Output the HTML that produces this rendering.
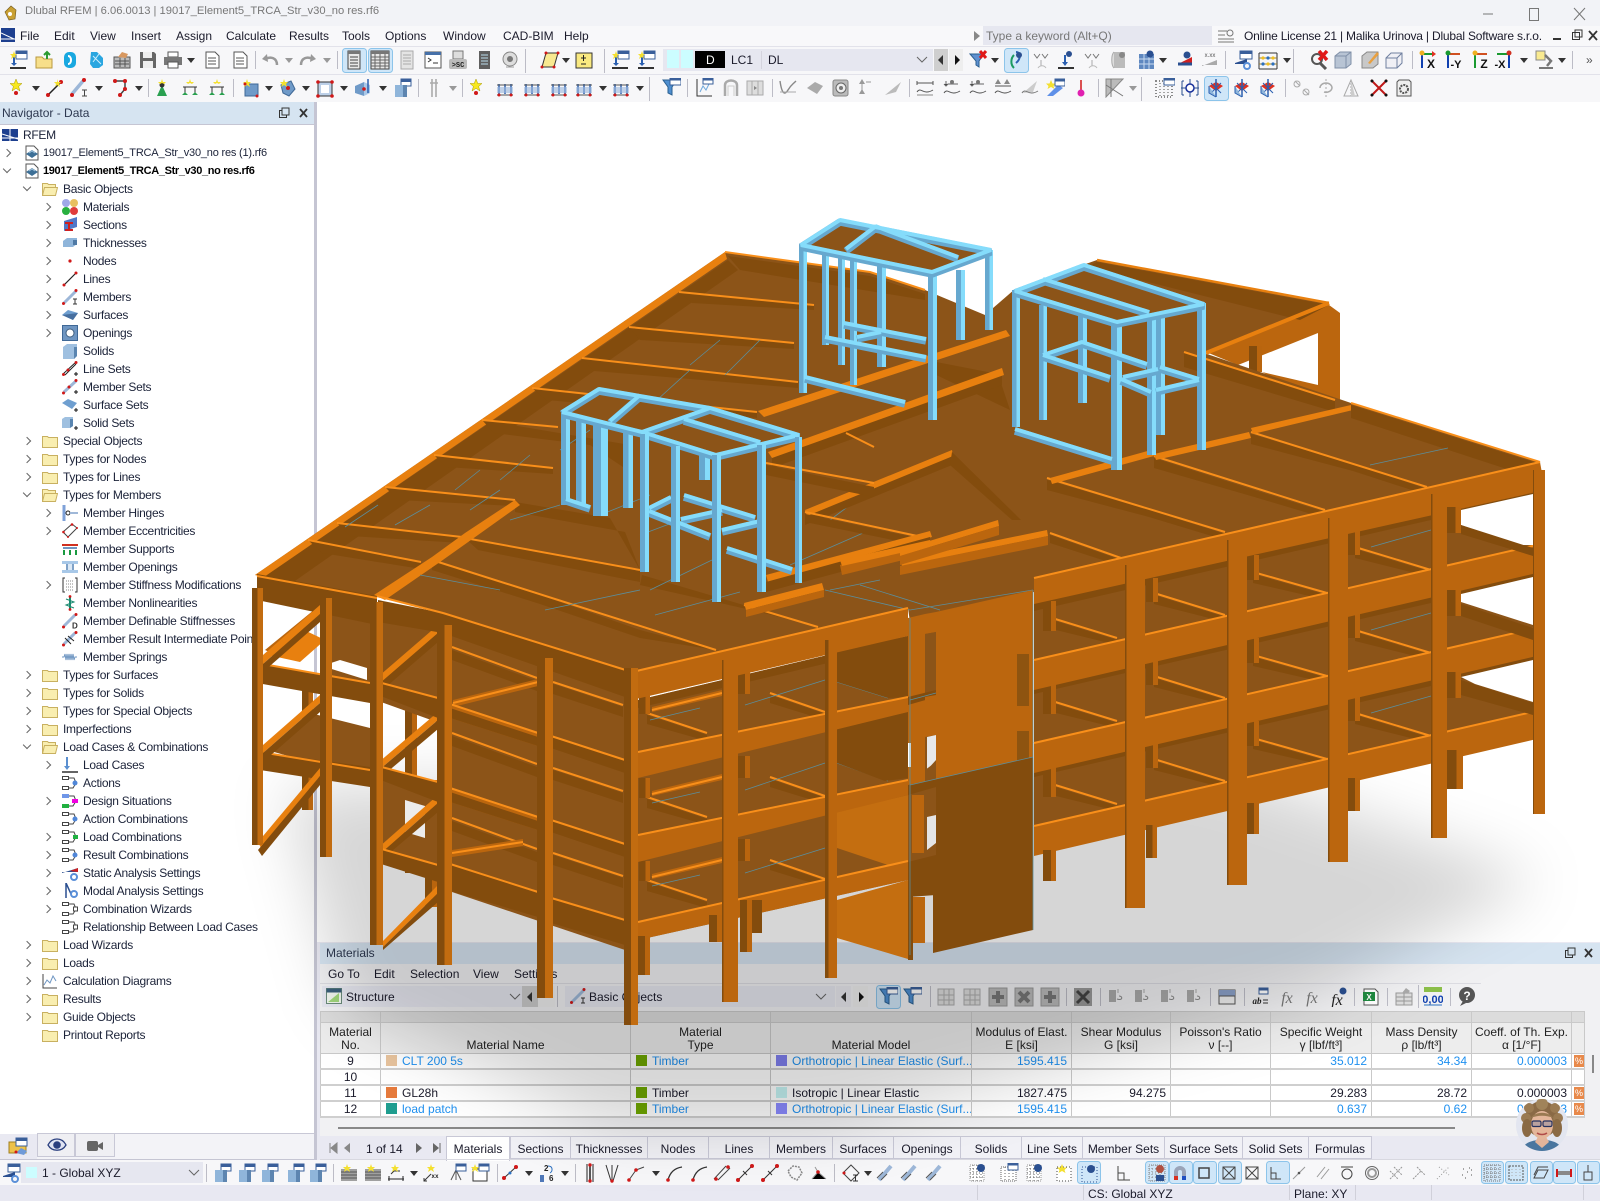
<!DOCTYPE html>
<html><head><meta charset="utf-8"><title>Dlubal RFEM</title>
<style>
html,body{margin:0;padding:0;width:1600px;height:1200px;overflow:hidden;background:#e9e9f2;font:12px/14px "Liberation Sans",sans-serif;color:#1a1a2a}
.t,.b0{position:absolute;white-space:nowrap}
.p{position:absolute}
#tree{position:absolute;left:0;top:126px;width:314px;height:1000px;overflow:hidden;letter-spacing:-.28px}
.r{position:relative;height:18px;line-height:18px;white-space:nowrap;color:#1b2238}
.r span{position:absolute;top:0}
.r svg{position:absolute;top:1px;width:16px;height:16px}
.r i{position:absolute;top:6px;width:5px;height:5px;border:solid #666;border-width:1.4px 1.4px 0 0;transform:rotate(45deg)}
.r i.o{transform:rotate(135deg);top:4px}
.l0 span{left:43px}.l0 svg{left:24px}.l0 i{left:4px}
.l1 span{left:63px}.l1 svg{left:42px}.l1 i{left:24px}
.l2 span{left:83px}.l2 svg{left:62px}.l2 i{left:44px}
table{position:absolute;left:320px;top:1011px;border-collapse:collapse;table-layout:fixed;width:1264px;font-size:12px}
td,th{padding:0;border:1px solid #c9c9c9;overflow:hidden;white-space:nowrap;font-weight:normal}
th{background:#ededed;vertical-align:bottom;text-align:center;line-height:13px;padding-bottom:1px;color:#222}
tr.bd td{height:14px;line-height:14px;border-bottom:2px solid #cfcfcf;background:#fff}
td.n{background:#e6e6e6;text-align:center}
td.c{background:#f8f8ef}
td.v{text-align:right;padding-right:4px}
td.b{color:#1e90f0}
td s{display:inline-block;width:11px;height:11px;margin:0 5px 0 5px;vertical-align:-1px;text-decoration:none}
td.pc{background:#fff}
td.pc b{display:block;width:10px;height:12px;background:#e8894a;color:#fff;font:9px/12px "Liberation Sans",sans-serif;text-align:center;margin-left:2px}
.tab{position:absolute;top:1136px;height:23px;line-height:24px;background:#f1f1f6;border:1px solid #c8c8d6;box-sizing:border-box;text-align:center;color:#1a1a2a}
.e{fill:#bb660e}.d{fill:#834c0d}.b{fill:#8c5418}.h{fill:#e8800f}.o2{fill:#c46e10}
.l{stroke:#f98f1a;stroke-width:2;fill:none}
.tl{stroke:#5b8e9c;stroke-width:.8;fill:none}
</style></head><body>

<!-- chrome backgrounds -->
<div class="p" style="left:0;top:0;width:1600px;height:26px;background:#f2f3f7"></div>
<div class="p" style="left:0;top:26px;width:1600px;height:20px;background:#f8f8fa;border-bottom:1px solid #e2e2ea"></div>
<div class="p" style="left:0;top:47px;width:1600px;height:27px;background:#f7f7f9;border-bottom:1px solid #e2e2ea"></div>
<div class="p" style="left:0;top:75px;width:1600px;height:27px;background:#f7f7f9"></div>
<div class="p" style="left:316px;top:102px;width:1284px;height:840px;background:#fff"></div>
<div class="p" style="left:0;top:124px;width:314px;height:1010px;background:#fff"></div>
<div class="p" style="left:314px;top:102px;width:3px;height:1058px;background:#c5c5d3"></div>

<!-- title -->
<div class="t" style="left:25px;top:4px;color:#777;font-size:11.2px">Dlubal RFEM | 6.06.0013 | 19017_Element5_TRCA_Str_v30_no res.rf6</div>
<svg class="p" style="left:2px;top:3px" width="18" height="20" viewBox="0 0 18 20"><path d="M3 9l6-6 5 4-1 9-6 1z" fill="#c9a033" stroke="#7a6020" stroke-width=".7"/><circle cx="8" cy="11" r="2" fill="#fff"/></svg>
<svg class="p" style="left:1478px;top:3px" width="120" height="20"><path d="M5 11h10" stroke="#777"/><rect x="51.500" y="5.500" width="9" height="12" fill="none" stroke="#777"/><path d="M96 5l11 12M107 5L96 17" stroke="#777"/></svg>

<!-- menu -->
<svg class="p" style="left:1px;top:28px" width="15" height="15"><rect width="14" height="14" fill="#1d3f8f"/><path d="M0 5l13 6M0 11h14" stroke="#fff"/></svg>
<div class="t" style="left:20px;top:29px">File</div><div class="t" style="left:54px;top:29px">Edit</div><div class="t" style="left:90px;top:29px">View</div><div class="t" style="left:131px;top:29px">Insert</div><div class="t" style="left:176px;top:29px">Assign</div><div class="t" style="left:226px;top:29px">Calculate</div><div class="t" style="left:289px;top:29px">Results</div><div class="t" style="left:342px;top:29px">Tools</div><div class="t" style="left:385px;top:29px">Options</div><div class="t" style="left:443px;top:29px">Window</div><div class="t" style="left:503px;top:29px">CAD-BIM</div><div class="t" style="left:564px;top:29px">Help</div>
<div class="p" style="left:983px;top:26px;width:229px;height:19px;background:#e6e7f0"></div>
<div class="t" style="left:986px;top:29px;color:#777">Type a keyword (Alt+Q)</div>
<svg class="p" style="left:973px;top:31px" width="8" height="10"><path d="M1 0l6 5-6 5z" fill="#888"/></svg>
<svg class="p" style="left:1217px;top:28px" width="18" height="16"><path d="M1 3h9M1 7h7M1 11h16M1 14h16" stroke="#777"/><circle cx="13" cy="5" r="3" fill="none" stroke="#777"/></svg>
<div class="t" style="left:1244px;top:29px;letter-spacing:-.19px">Online License 21 | Malika Urinova | Dlubal Software s.r.o.</div>
<svg class="p" style="left:1548px;top:28px" width="52" height="16"><path d="M5 11h8" stroke="#333" stroke-width="2"/><rect x="24.500" y="4.500" width="7" height="7" fill="none" stroke="#333"/><rect x="27" y="2" width="7" height="7" fill="none" stroke="#333"/><path d="M41 3l8 9M49 3l-8 9" stroke="#333" stroke-width="1.800"/></svg>

<!-- Navigator -->
<div class="p" style="left:0;top:102px;width:314px;height:22px;background:#d6e4f1;border-bottom:1px solid #c5c5d3"></div>
<div class="t" style="left:2px;top:106px;color:#2d3850">Navigator - Data</div>
<svg class="p" style="left:276px;top:106px" width="36" height="14"><rect x="3.500" y="4.500" width="7" height="7" fill="none" stroke="#333"/><rect x="6" y="2" width="7" height="7" fill="#d6e4f1" stroke="#333"/><path d="M24 3l7 8M31 3l-7 8" stroke="#333" stroke-width="1.800"/></svg>

<svg width="0" height="0" style="position:absolute"><defs>
<symbol id="fo" viewBox="0 0 16 16"><path d="M.5 3.500h5l1 1h9v10H.5z" fill="#f9eeb0" stroke="#c8b060"/></symbol>
<symbol id="fx" viewBox="0 0 16 16"><path d="M.5 14.500V2.500h5l1 1h7v3" fill="#f9eeb0" stroke="#c8b060"/><path d="M.5 14.500l2-8h13l-2 8z" fill="#f9eeb0" stroke="#c8b060"/></symbol>
<symbol id="rf" viewBox="0 0 16 16"><path d="M2 1h8l4 4v10H2z" fill="#fff" stroke="#555"/><path d="M2 9l6-4 6 4-6 4z" fill="#3d6f96"/><path d="M5 8l3-2 3 2" stroke="#9fc3dd" fill="none"/></symbol>
<symbol id="rm" viewBox="0 0 16 16"><circle cx="4" cy="4" r="4" fill="#a0a8e8"/><circle cx="12" cy="4" r="4" fill="#e8c060"/><circle cx="4" cy="12" r="4" fill="#28b040"/><circle cx="12" cy="12" r="4" fill="#e03c3c"/></symbol>
<symbol id="se" viewBox="0 0 16 16"><path d="M2 4l13-4v10L2 14z" fill="#4f78c8"/><path d="M3 6h8M7 6v7M3 13h8" stroke="#d02020" stroke-width="2"/></symbol>
<symbol id="th" viewBox="0 0 16 16"><path d="M1 6l4-3h10v6l-4 3H1z" fill="#8fb5da"/><path d="M11 5h4v5h-4z" fill="#4f7aa5"/></symbol>
<symbol id="nd" viewBox="0 0 16 16"><circle cx="8" cy="8" r="1.600" fill="#d01818"/></symbol>
<symbol id="ln" viewBox="0 0 16 16"><path d="M2 14L14 2" stroke="#222" stroke-width="1.200"/><circle cx="2" cy="14" r="1.500" fill="#d01818"/><circle cx="14" cy="2" r="1.500" fill="#d01818"/></symbol>
<symbol id="me" viewBox="0 0 16 16"><path d="M2 14L14 2" stroke="#9db7d8" stroke-width="3"/><circle cx="1.500" cy="14.500" r="1.500" fill="#d01818"/><circle cx="14" cy="1.500" r="1.500" fill="#d01818"/><path d="M11 10h4M13 10v5M11 15h4" stroke="#333"/></symbol>
<symbol id="su" viewBox="0 0 16 16"><path d="M0 8l6-5 10 3-5 7z" fill="#6f9fd0"/><path d="M0 8l11 5 5-7" fill="#476f9f"/></symbol>
<symbol id="op" viewBox="0 0 16 16"><rect x=".5" y=".5" width="15" height="15" fill="#6f96c2" stroke="#3f6896"/><circle cx="8" cy="8" r="4" fill="#fff" stroke="#3f5f80"/></symbol>
<symbol id="so" viewBox="0 0 16 16"><path d="M1 4l4-3h10v12l-3 3H1z" fill="#9fc0e0"/><path d="M12 4h3v9l-3 3z" fill="#5a85b0"/></symbol>
<symbol id="ls" viewBox="0 0 16 16"><path d="M1 13L14 1M3 14L14 3" stroke="#222"/><circle cx="6" cy="9" r="1.500" fill="#d01818"/><circle cx="1.500" cy="13.500" r="1.500" fill="#d01818"/><circle cx="14" cy="1.500" r="1.500" fill="#d01818"/><path d="M12 13h4M14 11v4" stroke="#111"/></symbol>
<symbol id="ms" viewBox="0 0 16 16"><path d="M2 13L14 2" stroke="#9db7d8" stroke-width="3"/><circle cx="7" cy="8" r="1.500" fill="#d01818"/><circle cx="1.500" cy="14" r="1.500" fill="#d01818"/><circle cx="14" cy="1.500" r="1.500" fill="#d01818"/><path d="M12 13h4M14 11v4" stroke="#111"/></symbol>
<symbol id="ss" viewBox="0 0 16 16"><path d="M0 6l6-4 9 4-5 6z" fill="#6f9fd0"/><path d="M12 13h4M14 11v4" stroke="#111"/></symbol>
<symbol id="sd" viewBox="0 0 16 16"><path d="M0 4l3-2h8v9l-3 2H0z" fill="#9fc0e0"/><path d="M8 4h3v7l-3 2z" fill="#5a85b0"/><path d="M12 13h4M14 11v4" stroke="#111"/></symbol>
<symbol id="hi" viewBox="0 0 16 16"><path d="M2 0v16" stroke="#7fa2d8" stroke-width="3"/><circle cx="6" cy="8" r="2" fill="#fff" stroke="#222"/><path d="M8 8h8" stroke="#a0b8d8" stroke-width="2"/></symbol>
<symbol id="ec" viewBox="0 0 16 16"><path d="M1 9L10 1l5 4-9 9z" fill="#fff" stroke="#444"/><circle cx="1.500" cy="9" r="1.300" fill="#d01818"/><circle cx="10" cy="1.500" r="1.300" fill="#d01818"/><circle cx="15" cy="5" r="1" fill="#d01818"/><circle cx="6" cy="14" r="1" fill="#d01818"/></symbol>
<symbol id="sp" viewBox="0 0 16 16"><path d="M0 4h16" stroke="#d03020" stroke-width="2"/><path d="M1 6h14v2H1z" fill="#6f96c2"/><path d="M2 9v5M8 9v5M14 9v5" stroke="#1a9a40" stroke-width="2"/></symbol>
<symbol id="mo" viewBox="0 0 16 16"><path d="M0 2h16v3H0zM0 11h16v3H0z" fill="#a8c8e8"/><path d="M4 5h8v6H4z" fill="#dbe8f5"/><path d="M5 5v6M11 5v6" stroke="#7fa2c8" stroke-width="2"/></symbol>
<symbol id="sm" viewBox="0 0 16 16"><path d="M3 1H1v14h2M13 1h2v14h-2" stroke="#333" fill="none"/><path d="M4 4h8M4 7h8M4 10h8M4 13h8" stroke="#888" stroke-dasharray="1 1"/></symbol>
<symbol id="nl" viewBox="0 0 16 16"><path d="M8 1v14" stroke="#1a8a70" stroke-width="2"/><path d="M4 4l8 3-8 3 8 3" stroke="#1a8a70" fill="none"/><circle cx="8" cy="1.500" r="1.400" fill="#d01818"/><circle cx="8" cy="14.500" r="1.400" fill="#d01818"/></symbol>
<symbol id="md" viewBox="0 0 16 16"><path d="M2 13L13 2" stroke="#9db7d8" stroke-width="3"/><circle cx="1.500" cy="14" r="1.500" fill="#d01818"/><circle cx="14" cy="1.500" r="1.500" fill="#d01818"/><text x="10" y="15.500" font-size="8" font-weight="bold" font-family="Liberation Sans" fill="#333">D</text></symbol>
<symbol id="mr" viewBox="0 0 16 16"><path d="M2 13L13 2" stroke="#9db7d8" stroke-width="3"/><path d="M3 7l6 6M6 5l6 5" stroke="#222"/><circle cx="1.500" cy="14" r="1.500" fill="#d01818"/><circle cx="14" cy="1.500" r="1.500" fill="#d01818"/></symbol>
<symbol id="mg" viewBox="0 0 16 16"><path d="M0 8h2l1-3 1 6 1-6 1 6 1-6 1 6 1-6 1 6 1-6 1 6 1-3h2" stroke="#6f96c2" fill="none"/></symbol>
<symbol id="lc" viewBox="0 0 16 16"><path d="M5 0v10" stroke="#5a8fd0" stroke-width="2"/><path d="M2 9l3 4 3-4z" fill="#5a8fd0"/><path d="M0 15h16" stroke="#222" stroke-width="1.400"/></symbol>
<symbol id="ac" viewBox="0 0 16 16"><rect x=".5" y="1.500" width="6" height="3" fill="#fff" stroke="#444"/><rect x=".5" y="11.500" width="6" height="3" fill="#fff" stroke="#444"/><path d="M7 3h5l2 5-3 5H7" fill="none" stroke="#444"/><circle cx="13" cy="8" r="2.500" fill="#4f86d8"/></symbol>
<symbol id="ad" viewBox="0 0 16 16"><rect width="7" height="4" y="1" fill="#6f96e8"/><rect width="7" height="4" y="11" fill="#20b040"/><path d="M7 3h5l2 5-3 5H7" fill="none" stroke="#444"/><rect x="10" y="6" width="6" height="4" fill="#f000e0"/></symbol>
<symbol id="ag" viewBox="0 0 16 16"><rect x=".5" y="1.500" width="6" height="3" fill="#fff" stroke="#444"/><rect x=".5" y="11.500" width="6" height="3" fill="#fff" stroke="#444"/><path d="M7 3h5l2 5-3 5H7" fill="none" stroke="#444"/><rect x="11" y="6" width="5" height="4" fill="#20b040"/></symbol>
<symbol id="st" viewBox="0 0 16 16"><path d="M0 8l16-5v4H0z" fill="#2a4f90"/><path d="M8 6l8-3v4z" fill="#d02020"/><circle cx="12" cy="12" r="3" fill="none" stroke="#5a8fd8" stroke-width="2"/></symbol>
<symbol id="mda" viewBox="0 0 16 16"><path d="M4 0l5 11M4 15V0" stroke="#2a4f90" stroke-width="1.500"/><circle cx="12" cy="11" r="3" fill="none" stroke="#5a8fd8" stroke-width="2"/></symbol>
<symbol id="cw" viewBox="0 0 16 16"><rect x=".5" y="1.500" width="6" height="3" fill="#fff" stroke="#444"/><rect x=".5" y="11.500" width="6" height="3" fill="#fff" stroke="#444"/><path d="M7 3h5l2 5-3 5H7" fill="none" stroke="#444"/><rect x="11.500" y="6" width="4" height="4" fill="#fff" stroke="#444"/></symbol>
<symbol id="cd" viewBox="0 0 16 16"><path d="M1 1v14h14" stroke="#444" fill="none"/><path d="M2 12l3-5 3 3 3-7 3 5" stroke="#6f96c2" fill="none"/></symbol>

<!-- toolbar glyphs 20x20 -->
<symbol id="a1" viewBox="0 0 20 20"><path d="M4 2h9l4 4v12H4z" fill="#fff" stroke="#555"/><path d="M6 8h8M6 11h8M6 14h8" stroke="#555"/></symbol>
<symbol id="a2" viewBox="0 0 20 20"><path d="M2 7h6l2 2h8v9H2z" fill="#f7df8a" stroke="#b89a40"/><path d="M13 9V3M10 5l3-3 3 3" stroke="#2a9a30" stroke-width="2" fill="none"/></symbol>
<symbol id="a3" viewBox="0 0 20 20"><rect x="4" y="2" width="12" height="16" rx="5" fill="#19a8e0"/><path d="M8 6c4 0 4 8 0 8" stroke="#fff" stroke-width="2" fill="none"/></symbol>
<symbol id="a4" viewBox="0 0 20 20"><path d="M4 2h6l6 6v7l-4 3H6l-3-4z" fill="#2aa6e0"/><path d="M6 6l8 8M6 12l6-8" stroke="#cdeefc"/></symbol>
<symbol id="a5" viewBox="0 0 20 20"><rect x="2" y="7" width="16" height="11" fill="#bbb" stroke="#555"/><path d="M3 11h14M3 14h14M8 8v9M13 8v9" stroke="#555"/><path d="M6 7l4-5 6 2-2 4z" fill="#d89860"/></symbol>
<symbol id="a6" viewBox="0 0 20 20"><path d="M2 2h14l2 2v14H2z" fill="#666"/><rect x="5" y="2" width="9" height="6" fill="#eee"/><rect x="5" y="11" width="10" height="7" fill="#eee"/></symbol>
<symbol id="a7" viewBox="0 0 20 20"><rect x="5" y="2" width="10" height="5" fill="#fff" stroke="#555"/><rect x="1" y="7" width="18" height="8" fill="#777"/><rect x="5" y="12" width="10" height="6" fill="#fff" stroke="#555"/></symbol>
<symbol id="a8" viewBox="0 0 20 20"><path d="M17 15c0-7-6-9-12-6" stroke="#999" stroke-width="2.500" fill="none"/><path d="M7 4L2 9l6 3z" fill="#999"/></symbol>
<symbol id="a9" viewBox="0 0 20 20"><path d="M3 15c0-7 6-9 12-6" stroke="#999" stroke-width="2.500" fill="none"/><path d="M13 4l5 5-6 3z" fill="#999"/></symbol>
<symbol id="b1" viewBox="0 0 20 20"><rect x="4" y="1" width="12" height="18" fill="#e8e8e8" stroke="#444"/><rect x="4" y="1" width="12" height="3" fill="#777"/><path d="M6 7h8M6 10h8M6 13h8M6 16h8" stroke="#444"/></symbol>
<symbol id="b2" viewBox="0 0 20 20"><rect x="1" y="1" width="18" height="18" fill="#e8e8e8" stroke="#444"/><rect x="1" y="1" width="18" height="3" fill="#777"/><path d="M1 7h18M1 10h18M1 13h18M1 16h18M5 4v15M10 4v15M15 4v15" stroke="#666"/></symbol>
<symbol id="b3" viewBox="0 0 20 20"><rect x="4" y="1" width="12" height="18" fill="#e4e4e4" stroke="#aaa"/><path d="M6 5h8M6 8h8M6 11h8M6 14h8" stroke="#aaa"/></symbol>
<symbol id="b4" viewBox="0 0 20 20"><rect x="2" y="2" width="16" height="16" fill="#fff" stroke="#555"/><rect x="2" y="2" width="16" height="3" fill="#4670a8"/><path d="M5 8l3 2-3 2M10 13h5" stroke="#333" fill="none"/></symbol>
<symbol id="b5" viewBox="0 0 20 20"><rect x="5" y="1" width="10" height="8" fill="#ddd" stroke="#777"/><rect x="1" y="9" width="18" height="10" rx="2" fill="#bbb"/><text x="10" y="17" font-size="7" font-weight="bold" font-family="Liberation Mono" text-anchor="middle" fill="#222">&gt;SC</text></symbol>
<symbol id="b6" viewBox="0 0 20 20"><rect x="5" y="1" width="11" height="18" fill="#5f5f5f"/><path d="M7 5h7M7 8h7M7 11h7M7 14h7" stroke="#bde"/></symbol>
<symbol id="b7" viewBox="0 0 20 20"><circle cx="10" cy="9" r="7" fill="#ddd" stroke="#888"/><circle cx="10" cy="9" r="3" fill="#777"/><path d="M6 17h8" stroke="#999"/></symbol>
<symbol id="b8" viewBox="0 0 20 20"><path d="M6 3h12l-4 14H2z" fill="#f9e990" stroke="#333"/><circle cx="6" cy="3" r="1.500" fill="#d01818"/><circle cx="18" cy="3" r="1.500" fill="#d01818"/><circle cx="2" cy="17" r="1.500" fill="#d01818"/><circle cx="14" cy="17" r="1.500" fill="#d01818"/></symbol>
<symbol id="b9" viewBox="0 0 20 20"><rect x="2" y="3" width="16" height="15" fill="#f9e980" stroke="#333"/><path d="M7 8h5M9.500 5v6M7 14h5" stroke="#222"/></symbol>
<symbol id="c1" viewBox="0 0 20 20"><rect x="8" y="1" width="11" height="8" fill="#fff" stroke="#3a5f9a"/><rect x="8" y="1" width="11" height="3" fill="#3a5f9a"/><path d="M6 4v11" stroke="#2a5fb0" stroke-width="2"/><path d="M2 18h16" stroke="#333" stroke-width="2"/><path d="M3 13l3 3 3-3z" fill="#2a5fb0"/><path d="M6 1l1 3 2 0-2 2 1 3-2-2-3 2 1-3-2-2h3z" fill="#f4e030"/></symbol>
<symbol id="c2" viewBox="0 0 20 20"><path d="M7 1l1.800 4.500H13l-3.400 3 1.400 4.500L7 10.300 3 13l1.400-4.500L1 5.500h4.200z" fill="#f8e81e" stroke="#a89800" stroke-width=".5"/><circle cx="7" cy="15" r="2" fill="#d01818"/></symbol>
<symbol id="c3" viewBox="0 0 20 20"><path d="M3 17L16 4" stroke="#222" stroke-width="1.500"/><circle cx="3" cy="17" r="2" fill="#d01818"/><circle cx="16" cy="4" r="2" fill="#d01818"/><path d="M12 1l1 3h3l-2 2 1 3-3-2-2 2 1-3-2-2h3z" fill="#f4e030"/></symbol>
<symbol id="c4" viewBox="0 0 20 20"><path d="M3 16L14 3" stroke="#9db7d8" stroke-width="3.500"/><circle cx="3" cy="17" r="2" fill="#d01818"/><circle cx="15" cy="2" r="2" fill="#d01818"/><path d="M13 12h5M15.500 12v6M13 18h5" stroke="#444"/></symbol>
<symbol id="c5" viewBox="0 0 20 20"><path d="M4 3h10v8l-5 6" fill="none" stroke="#444" stroke-width="1.500"/><circle cx="4" cy="3" r="2" fill="#d01818"/><circle cx="14" cy="3" r="2" fill="#d01818"/><circle cx="14" cy="11" r="2" fill="#d01818"/><circle cx="9" cy="17" r="2" fill="#d01818"/></symbol>
<symbol id="c6" viewBox="0 0 20 20"><path d="M10 7l-5 11h10z" fill="#2aa050"/><circle cx="10" cy="7" r="2.500" fill="#333"/><path d="M10 1l1 3h3l-2 2-2-1-2 1-2-2h3z" fill="#f4e030"/></symbol>
<symbol id="c7" viewBox="0 0 20 20"><path d="M3 9h14M5 9v6M15 9v6" stroke="#333"/><path d="M2 17l3-3 3 3zM12 17l3-3 3 3z" fill="#2aa050"/><path d="M10 1l1 3h3l-2 2-2-1-2 1-2-2h3z" fill="#f4e030"/></symbol>
<symbol id="c8" viewBox="0 0 20 20"><rect x="5" y="6" width="13" height="12" fill="#6f9ac8" stroke="#3f6896"/><path d="M7 1l1 3h3l-2 2 1 3-3-2-3 2 1-3-2-2h3z" fill="#f4e030"/><circle cx="17" cy="18" r="1.500" fill="#d01818"/><circle cx="5" cy="6" r="1.500" fill="#d01818"/></symbol>
<symbol id="c9" viewBox="0 0 20 20"><path d="M3 7l10-4 4 8-6 7-6-3z" fill="#6f9ac8" stroke="#3f6896"/><circle cx="10" cy="10" r="2" fill="#d01818"/><path d="M6 1l1 3h3l-2 2 1 3-3-2-3 2 1-3-2-2h3z" fill="#f4e030"/></symbol>
<symbol id="d1" viewBox="0 0 20 20"><path d="M3 4h14v14H3z" fill="#bcd0e8" stroke="#333"/><rect x="6" y="7" width="8" height="8" fill="#fff"/><circle cx="3" cy="4" r="1.800" fill="#d01818"/><circle cx="17" cy="4" r="1.800" fill="#d01818"/><circle cx="3" cy="18" r="1.800" fill="#d01818"/><circle cx="17" cy="18" r="1.800" fill="#d01818"/></symbol>
<symbol id="d2" viewBox="0 0 20 20"><path d="M2 8l9-4v14l-9-3z" fill="#6f9ac8"/><path d="M11 4l6 3v8l-6 3z" fill="#aac8e8"/><path d="M15 1v14" stroke="#2a5fb0" stroke-width="1.500"/><circle cx="11" cy="11" r="1.800" fill="#d01818"/></symbol>
<symbol id="d3" viewBox="0 0 20 20"><rect x="9" y="1" width="10" height="7" fill="#fff" stroke="#3a5f9a"/><rect x="9" y="1" width="10" height="3" fill="#3a5f9a"/><path d="M3 7h12v12H3z" fill="#8fb5da"/><path d="M11 7h4v12h-4z" fill="#5d85b0"/></symbol>
<symbol id="d4" viewBox="0 0 20 20"><path d="M8 1v18M12 1v18M6 5h8" stroke="#aaa" stroke-width="1.600"/></symbol>
<symbol id="d5" viewBox="0 0 20 20"><path d="M4 6v10M16 6v10M10 6v10" stroke="#2a5fb0" stroke-width="1.500"/><path d="M2 17h16M2 7h16" stroke="#555"/><path d="M2 9h16v6H2z" fill="#9bb8dc" fill-opacity=".6"/><circle cx="16" cy="17" r="1.500" fill="#d01818"/><circle cx="4" cy="17" r="1.500" fill="#d01818"/></symbol>
<symbol id="d6" viewBox="0 0 20 20"><path d="M2 2h14l-5 7v8l-4-2V9z" fill="#4f8fd0" stroke="#2a5f90"/><rect x="9" y="0" width="11" height="7" fill="#fff" stroke="#3a5f9a"/><rect x="9" y="0" width="11" height="2.500" fill="#3a5f9a"/></symbol>
<symbol id="d7" viewBox="0 0 20 20"><path d="M3 1v17h15" fill="none" stroke="#333"/><path d="M6 14l3-6 3 4 3-6" fill="none" stroke="#6fa8dc"/><rect x="9" y="0" width="10" height="6" fill="#fff" stroke="#3a5f9a"/><rect x="9" y="0" width="10" height="2.500" fill="#3a5f9a"/></symbol>
<symbol id="d8" viewBox="0 0 20 20"><path d="M4 18V7c0-6 12-6 12 0v11" fill="none" stroke="#aaa" stroke-width="2.500"/><path d="M7 18V8h6v10" fill="none" stroke="#ccc"/></symbol>
<symbol id="d9" viewBox="0 0 20 20"><rect x="2" y="3" width="16" height="14" fill="#ddd" stroke="#aaa"/><path d="M7 3v14M13 3v14" stroke="#aaa"/><path d="M9 8l3 2-3 2z" fill="#888"/></symbol>
<symbol id="e1" viewBox="0 0 20 20"><path d="M2 3c2 14 5 14 8 9s4-5 8-9" fill="none" stroke="#888" stroke-width="1.400"/><path d="M2 14h16" stroke="#aaa"/></symbol>
<symbol id="e2" viewBox="0 0 20 20"><path d="M2 10l8-6 8 4-6 8z" fill="#aaa"/></symbol>
<symbol id="e3" viewBox="0 0 20 20"><rect x="2" y="2" width="15" height="16" rx="2" fill="#bbb" stroke="#888"/><circle cx="10" cy="10" r="5" fill="#eee" stroke="#666"/><circle cx="10" cy="10" r="2" fill="#777"/></symbol>
<symbol id="e4" viewBox="0 0 20 20"><path d="M7 1l3 5H4zM7 11l3 5H4z" fill="#999"/><path d="M7 6v6" stroke="#999"/><path d="M16 4h-5" stroke="#999"/></symbol>
<symbol id="e5" viewBox="0 0 20 20"><path d="M2 17l16-13-5 10z" fill="#bbb"/></symbol>
<symbol id="e6" viewBox="0 0 20 20"><path d="M2 5h16M2 3v4M18 3v4" stroke="#555"/><path d="M2 14c4-6 6 4 16-2" fill="none" stroke="#555"/><path d="M2 17h16" stroke="#888"/></symbol>
<symbol id="e7" viewBox="0 0 20 20"><path d="M2 6l2 2 2-2 10 0M4 8V3" stroke="#666"/><circle cx="10" cy="4" r="2" fill="#777"/><path d="M2 15c4-6 6 4 16-2" fill="none" stroke="#555"/></symbol>
<symbol id="e8" viewBox="0 0 20 20"><path d="M5 1l3 5H2zM14 1l3 5h-6z" fill="#888"/><path d="M2 8h16" stroke="#555"/><path d="M2 15c4-6 6 4 16-2" fill="none" stroke="#555"/></symbol>
<symbol id="e9" viewBox="0 0 20 20"><path d="M3 15l14-12-4 11z" fill="#ccc"/><path d="M2 15c4-6 6 4 16-2" fill="none" stroke="#777"/></symbol>
<symbol id="f1" viewBox="0 0 20 20"><path d="M2 18L13 7l5 3-10 8z" fill="#5f90e8"/><path d="M6 2l1.500 3.500H11L8.500 8 9.500 11 6 9l-3.500 2 1-3L1 5.500h3.500z" fill="#f4e030"/><rect x="10" y="1" width="10" height="7" fill="#fff" stroke="#3a5f9a"/><rect x="10" y="1" width="10" height="2.500" fill="#3a5f9a"/></symbol>
<symbol id="f2" viewBox="0 0 20 20"><path d="M10 2v10" stroke="#d01818" stroke-width="1.500"/><circle cx="10" cy="15" r="3.500" fill="#e020b0"/></symbol>
<symbol id="f3" viewBox="0 0 20 20"><path d="M1 1h17L1 19z" fill="#bbb" stroke="#888"/><path d="M6 1v18M1 7l17 11" stroke="#777" fill="none"/></symbol>
<symbol id="f4" viewBox="0 0 20 20"><rect x="1" y="3" width="16" height="16" fill="none" stroke="#888" stroke-dasharray="1 2" stroke-width="2"/><path d="M5 5v14M9 5v14M13 5v14" stroke="#888" stroke-dasharray="1 2" stroke-width="1.500"/><rect x="9" y="0" width="11" height="7" fill="#fff" stroke="#3a5f9a"/><rect x="9" y="0" width="11" height="2.500" fill="#3a5f9a"/></symbol>
<symbol id="f5" viewBox="0 0 20 20"><path d="M2 3v14M18 3v14M2 3h2M16 3h2M2 17h2M16 17h2" stroke="#2a4f90"/><path d="M1 10h18M10 1v18" stroke="#2a4f90"/><circle cx="10" cy="10" r="4" fill="#fff" stroke="#18309a" stroke-width="1.500"/></symbol>
<symbol id="f6" viewBox="0 0 20 20"><path d="M3 8l7-4 7 4-7 5z" fill="#e03020"/><path d="M10 1v18" stroke="#2a5fb0" stroke-width="1.500"/><path d="M5 5l10 10M5 15L15 5" stroke="#2a5fb0"/><path d="M3 8v7l7 4" fill="#8fb5da" stroke="#2a5fb0"/></symbol>
<symbol id="f8" viewBox="0 0 20 20"><path d="M3 3l5 5M12 12l5 5" stroke="#aaa"/><circle cx="5" cy="6" r="3" fill="none" stroke="#aaa"/><circle cx="14" cy="14" r="3" fill="none" stroke="#aaa"/></symbol>
<symbol id="f9" viewBox="0 0 20 20"><path d="M10 1v18" stroke="#aaa" stroke-dasharray="2 2"/><path d="M4 10a6 5 0 0 1 12 0a6 5 0 0 1-8 4" fill="none" stroke="#aaa" stroke-width="1.500"/></symbol>
<symbol id="g1" viewBox="0 0 20 20"><path d="M10 2l-7 16h14z" fill="none" stroke="#aaa"/><path d="M10 2v16" stroke="#aaa" stroke-dasharray="2 1"/><path d="M10 2l4 16h-4z" fill="#ccc"/></symbol>
<symbol id="g2" viewBox="0 0 20 20"><path d="M2 2l16 16M18 2L2 18" stroke="#c01818" stroke-width="2"/><circle cx="3" cy="3" r="1.500" fill="#111"/><circle cx="17" cy="3" r="1.500" fill="#111"/><circle cx="3" cy="17" r="1.500" fill="#111"/><circle cx="17" cy="17" r="1.500" fill="#111"/></symbol>
<symbol id="g3" viewBox="0 0 20 20"><path d="M3 4l2-2h10l2 2v14H3z" fill="#eee" stroke="#555"/><circle cx="10" cy="11" r="4" fill="none" stroke="#555" stroke-dasharray="2 1" stroke-width="2"/></symbol>
<symbol id="g4" viewBox="0 0 20 20"><path d="M2 4h14l-5 7v6l-3-2v-4z" fill="#5f90d0" stroke="#2a5f90"/><path d="M12 1l6 7M18 1l-6 7" stroke="#e01818" stroke-width="3"/></symbol>
<symbol id="g5" viewBox="0 0 20 20"><path d="M10 2c5 0 5 7 0 11" fill="none" stroke="#2a5fb0" stroke-width="2"/><path d="M8 18c-4-4-3-10 0-13" fill="none" stroke="#1a9a60" stroke-width="2"/><circle cx="13" cy="5" r="3" fill="#2a4f90"/></symbol>
<symbol id="g6" viewBox="0 0 20 20"><path d="M2 4l3 4 3-4M10 4l3 4 3-4" stroke="#777" fill="none"/><path d="M9 10v6" stroke="#aaa"/><path d="M6 18c2-3 6-3 8 0" fill="none" stroke="#bbb"/></symbol>
<symbol id="g7" viewBox="0 0 20 20"><circle cx="13" cy="4" r="3" fill="#2a4f90"/><path d="M9 5v9" stroke="#2a5fb0" stroke-width="2"/><path d="M6 12l3 4 3-4z" fill="#2a5fb0"/><path d="M2 18h16" stroke="#333" stroke-width="2"/></symbol>
<symbol id="g9" viewBox="0 0 20 20"><rect x="5" y="2" width="11" height="16" fill="#bbb"/><path d="M5 2c-3 3-3 13 0 16" fill="#ddd" stroke="#aaa"/><circle cx="13" cy="5" r="3" fill="#888"/></symbol>
<symbol id="h1" viewBox="0 0 20 20"><rect x="2" y="4" width="15" height="15" fill="#5f88c0"/><path d="M2 9h15M2 14h15M7 4v15M12 4v15" stroke="#c8daf0"/><circle cx="13" cy="4" r="3.500" fill="#2a4f90"/></symbol>
<symbol id="h2" viewBox="0 0 20 20"><path d="M2 14l14-7v7z" fill="#d02020"/><path d="M2 14h14" stroke="#2a4f90" stroke-width="3"/><circle cx="11" cy="5" r="3.500" fill="#2a4f90"/></symbol>
<symbol id="h3" viewBox="0 0 20 20"><path d="M2 16l15-6v5H2z" fill="#aaa"/><text x="10" y="7" font-size="6" font-family="Liberation Sans" text-anchor="middle" fill="#555">x.xx</text></symbol>
<symbol id="h4" viewBox="0 0 20 20"><path d="M2 13l12-4v5H2z" fill="#2a4f90"/><circle cx="14" cy="16" r="3" fill="none" stroke="#5a8fd8" stroke-width="2"/><rect x="7" y="1" width="12" height="8" fill="#fff" stroke="#3a5f9a"/><rect x="7" y="1" width="12" height="3" fill="#3a5f9a"/></symbol>
<symbol id="h5" viewBox="0 0 20 20"><path d="M1 3v16M19 3v16M1 3h18M1 19h18" stroke="#333"/><path d="M1 8h18M1 14h18" stroke="#9a8030"/><circle cx="5" cy="8" r="1.600" fill="#f0c020"/><circle cx="10" cy="8" r="1.600" fill="#2a6fc0"/><circle cx="15" cy="8" r="1.600" fill="#f0c020"/><circle cx="5" cy="14" r="1.600" fill="#2a6fc0"/><circle cx="10" cy="14" r="1.600" fill="#f0c020"/><circle cx="15" cy="14" r="1.600" fill="#2a6fc0"/></symbol>
<symbol id="h6" viewBox="0 0 20 20"><circle cx="8" cy="9" r="5" fill="none" stroke="#555" stroke-width="2"/><path d="M11 13l6 6" stroke="#555" stroke-width="3"/><path d="M10 1l8 9M18 1l-8 9" stroke="#e01818" stroke-width="3.500"/></symbol>
<symbol id="h7" viewBox="0 0 20 20"><path d="M2 6l5-4h11v12l-5 4H2z" fill="#b8c4d4" stroke="#8090a8"/><path d="M2 6h11v12M13 6l5-4" stroke="#8090a8" fill="none"/></symbol>
<symbol id="h8" viewBox="0 0 20 20"><path d="M2 6l5-4h11v12l-5 4H2z" fill="#c8c8c8" stroke="#888"/><path d="M8 13l9-11 2 2-9 10z" fill="#e8a040"/></symbol>
<symbol id="h9" viewBox="0 0 20 20"><path d="M2 8l5-5h11v10l-5 5H2z" fill="#f0f0f5" stroke="#7080a0"/><path d="M2 8h11v10M13 8l5-5" stroke="#7080a0" fill="none"/></symbol>
<symbol id="i1" viewBox="0 0 20 20"><path d="M5 2v16" stroke="#1040b0" stroke-width="2"/><path d="M5 4h12" stroke="#1a9a30" stroke-width="2"/><circle cx="5" cy="3" r="2.500" fill="#f0b020"/><path d="M15 1l4 3-4 3z" fill="#e03020"/><text x="14" y="18" font-size="12" font-weight="bold" font-family="Liberation Sans" text-anchor="middle" fill="#111">X</text></symbol>
<symbol id="i2" viewBox="0 0 20 20"><path d="M5 2v16" stroke="#1040b0" stroke-width="2"/><path d="M5 4h12" stroke="#d05020" stroke-width="2"/><circle cx="5" cy="3" r="2.500" fill="#1a9a30"/><text x="13" y="18" font-size="11" font-weight="bold" font-family="Liberation Sans" text-anchor="middle" fill="#111">-Y</text></symbol>
<symbol id="i3" viewBox="0 0 20 20"><path d="M5 2v16" stroke="#1a9a30" stroke-width="2"/><path d="M5 4h12" stroke="#d05020" stroke-width="2"/><circle cx="5" cy="3" r="2.500" fill="#f0b020"/><text x="14" y="18" font-size="12" font-weight="bold" font-family="Liberation Sans" text-anchor="middle" fill="#111">Z</text></symbol>
<symbol id="i4" viewBox="0 0 20 20"><path d="M15 2v16" stroke="#1040b0" stroke-width="2"/><path d="M3 4h12" stroke="#1a9a30" stroke-width="2"/><circle cx="15" cy="3" r="2.500" fill="#d03020"/><text x="6" y="18" font-size="11" font-weight="bold" font-family="Liberation Sans" text-anchor="middle" fill="#111">-X</text></symbol>
<symbol id="i5" viewBox="0 0 20 20"><rect x="1" y="1" width="9" height="9" fill="#f9ea90" stroke="#888"/><path d="M10 5l6 6-4 5" stroke="#777" stroke-width="2.500" fill="none"/><path d="M4 18h14" stroke="#777" stroke-width="2"/></symbol>
<symbol id="j1" viewBox="0 0 20 20"><path d="M2 2h16v16H2z" fill="#ddd" stroke="#aaa"/><path d="M2 8h16M2 13h16M8 2v16M13 2v16" stroke="#aaa"/></symbol>
<symbol id="j2" viewBox="0 0 20 20"><rect x="1" y="1" width="18" height="18" fill="#bbb" stroke="#999"/><path d="M10 4v12M4 10h12" stroke="#777" stroke-width="4"/></symbol>
<symbol id="j3" viewBox="0 0 20 20"><rect x="1" y="1" width="18" height="18" fill="#bbb" stroke="#999"/><path d="M5 5l10 10M15 5L5 15" stroke="#777" stroke-width="4"/></symbol>
<symbol id="j4" viewBox="0 0 20 20"><rect x="1" y="1" width="18" height="18" fill="#999"/><path d="M4 4l12 12M16 4L4 16" stroke="#444" stroke-width="3"/></symbol>
<symbol id="j5" viewBox="0 0 20 20"><path d="M3 3h7v6H3zM3 9h7v6H3z" fill="#aaa"/><path d="M11 12c6 2 6-3 2-3" stroke="#888" fill="none"/><path d="M12 2v4" stroke="#aaa"/></symbol>
<symbol id="j6" viewBox="0 0 20 20"><rect x="2" y="3" width="16" height="14" fill="#eee" stroke="#555"/><rect x="2" y="3" width="16" height="6" fill="#8aa0c8"/><path d="M2 9h16" stroke="#555"/></symbol>
<symbol id="j7" viewBox="0 0 20 20"><rect x="9" y="1" width="9" height="6" fill="#fff" stroke="#3a5f9a"/><rect x="9" y="1" width="9" height="2.500" fill="#3a5f9a"/><text x="7" y="17" font-size="9" font-weight="bold" font-style="italic" font-family="Liberation Serif" text-anchor="middle" fill="#222">ab</text><path d="M13 13h5M13 16h5" stroke="#333"/></symbol>
<symbol id="j8" viewBox="0 0 20 20"><text x="10" y="16" font-size="16" font-style="italic" font-family="Liberation Serif" text-anchor="middle" fill="#777">fx</text></symbol>
<symbol id="j9" viewBox="0 0 20 20"><text x="9" y="18" font-size="16" font-style="italic" font-family="Liberation Serif" text-anchor="middle" fill="#222">fx</text><circle cx="15" cy="4" r="3.500" fill="#2a4f90"/></symbol>
<symbol id="k1" viewBox="0 0 20 20"><path d="M3 2h11l3 3v13H3z" fill="#fff" stroke="#555"/><rect x="2" y="5" width="12" height="9" fill="#1f8a40"/><text x="8" y="13" font-size="8" font-weight="bold" font-family="Liberation Sans" text-anchor="middle" fill="#fff">X</text></symbol>
<symbol id="k2" viewBox="0 0 20 20"><rect x="2" y="6" width="16" height="12" fill="#ddd" stroke="#999"/><path d="M2 10h16M2 14h16M10 6v12" stroke="#999"/><path d="M8 6l4-5 4 3-2 2z" fill="#aaa"/></symbol>
<symbol id="k3" viewBox="0 0 20 20"><rect x="1" y="0" width="18" height="5" fill="#8cbf4a"/><text x="10" y="16" font-size="11" font-family="Liberation Sans" text-anchor="middle" fill="#1040b0" font-weight="bold">0,00</text><path d="M1 18h18" stroke="#2a6fc0"/></symbol>
<symbol id="k4" viewBox="0 0 20 20"><circle cx="10" cy="8" r="8" fill="#555"/><text x="10" y="13" font-size="12" font-weight="bold" font-family="Liberation Sans" text-anchor="middle" fill="#fff">?</text><path d="M6 14l-3 5 6-3z" fill="#555"/></symbol>
<symbol id="l1" viewBox="0 0 20 20"><rect x="2" y="6" width="16" height="12" fill="#a0a0a0"/><path d="M2 9h16M2 12h16M2 15h16" stroke="#555"/><path d="M8 1l1 3h3l-2 2 1 3-3-2-3 2 1-3-2-2h3z" fill="#f4e030"/></symbol>
<symbol id="l2" viewBox="0 0 20 20"><path d="M2 16h16M3 13v5M17 13v5" stroke="#222"/><path d="M5 11l3-3 6 0" stroke="#333" fill="none"/><path d="M9 1l1 3h3l-2 2 1 3-3-2-3 2 1-3-2-2h3z" fill="#f4e030"/></symbol>
<symbol id="l3" viewBox="0 0 20 20"><path d="M2 18l7-7" stroke="#333"/><path d="M2 15v3h3" stroke="#333" fill="none"/><text x="13" y="15" font-size="6" font-weight="bold" font-family="Liberation Mono" text-anchor="middle" fill="#222">xx</text><path d="M9 1l1 3h3l-2 2 1 3-3-2-3 2 1-3-2-2h3z" fill="#f4e030"/></symbol>
<symbol id="l4" viewBox="0 0 20 20"><path d="M4 17l5-10 5 10M9 7v10" stroke="#555" fill="none"/><rect x="9" y="1" width="10" height="7" fill="#fff" stroke="#3a5f9a"/><rect x="9" y="1" width="10" height="2.500" fill="#3a5f9a"/></symbol>
<symbol id="l5" viewBox="0 0 20 20"><rect x="3" y="6" width="14" height="12" fill="#fff" stroke="#333"/><rect x="9" y="1" width="10" height="7" fill="#fff" stroke="#3a5f9a"/><rect x="9" y="1" width="10" height="2.500" fill="#3a5f9a"/><path d="M5 1l1 3h3l-2 2 1 3-3-2-3 2 1-3-2-2h3z" fill="#f4e030"/></symbol>
<symbol id="l6" viewBox="0 0 20 20"><path d="M3 15L15 4" stroke="#333"/><circle cx="3" cy="15" r="2" fill="#d01818"/><circle cx="15" cy="4" r="2" fill="#d01818"/><circle cx="9" cy="10" r="1.500" fill="#2a6fc0"/></symbol>
<symbol id="l7" viewBox="0 0 20 20"><text x="7" y="8" font-size="8" font-weight="bold" font-family="Liberation Sans" fill="#222">2</text><rect x="3" y="12" width="4" height="7" fill="#4f78b8"/><text x="12" y="18" font-size="8" font-weight="bold" font-family="Liberation Sans" fill="#222">6</text><path d="M11 3c5 0 5 5 2 7" stroke="#2a6fc0" fill="none"/></symbol>
<symbol id="l8" viewBox="0 0 20 20"><path d="M6 1v18M12 1v18" stroke="#222"/><path d="M9 1v18" stroke="#222" stroke-width="1.500"/><circle cx="9" cy="2" r="1.700" fill="#d01818"/><circle cx="9" cy="18" r="1.700" fill="#d01818"/></symbol>
<symbol id="l9" viewBox="0 0 20 20"><path d="M3 2l5 16M9 2v16M15 2l-5 16" stroke="#333"/><circle cx="9" cy="18" r="1.700" fill="#d01818"/></symbol>
<symbol id="m1" viewBox="0 0 20 20"><path d="M2 17L9 7l8-3" stroke="#444" fill="none"/><circle cx="2" cy="17" r="1.800" fill="#d01818"/><circle cx="9" cy="7" r="1.800" fill="#d01818"/></symbol>
<symbol id="m2" viewBox="0 0 20 20"><path d="M3 17C5 9 10 5 17 4" stroke="#333" fill="none" stroke-width="1.300"/><circle cx="3" cy="17" r="1.800" fill="#d01818"/></symbol>
<symbol id="m3" viewBox="0 0 20 20"><path d="M2 16L14 3M6 17L18 5" stroke="#444"/><circle cx="4" cy="16" r="1.800" fill="#d01818"/><circle cx="16" cy="4" r="1.800" fill="#d01818"/></symbol>
<symbol id="m4" viewBox="0 0 20 20"><path d="M3 17L17 3M8 8l4 4" stroke="#333"/><circle cx="3" cy="17" r="2" fill="#d01818"/><circle cx="17" cy="3" r="2" fill="#d01818"/></symbol>
<symbol id="m5" viewBox="0 0 20 20"><path d="M3 8l5-5 6 1 3 6-5 7-6-3z" fill="none" stroke="#888" stroke-width="1.500" stroke-dasharray="2 1"/></symbol>
<symbol id="m6" viewBox="0 0 20 20"><path d="M3 16l6-7 8 7M9 9l-3-5" stroke="#999"/><circle cx="9" cy="9" r="1.800" fill="#d01818"/></symbol>
<symbol id="m7" viewBox="0 0 20 20"><path d="M2 10l8-8 8 8-8 8z" fill="none" stroke="#444"/><path d="M12 12h5M14.500 12v6M12 18h5" stroke="#333"/><circle cx="3" cy="10" r="1.500" fill="#d01818"/></symbol>
<symbol id="n1" viewBox="0 0 20 20"><path d="M4 17L16 3" stroke="#9db7d8" stroke-width="4"/><path d="M2 15l6-6M6 17l6-6" stroke="#555"/></symbol>
<symbol id="n2" viewBox="0 0 20 20"><rect x="2" y="2" width="14" height="16" fill="#fff" stroke="#999" stroke-dasharray="1 1"/><path d="M5 2v16M9 2v16M13 2v16M2 6h14M2 10h14M2 14h14" stroke="#666" stroke-dasharray="1 2"/><circle cx="13" cy="5" r="4" fill="#2a4f90"/></symbol>
<symbol id="n3" viewBox="0 0 20 20"><rect x="2" y="4" width="15" height="14" fill="#fff" stroke="#666" stroke-dasharray="1 1"/><path d="M6 4v14M10 4v14M14 4v14" stroke="#666" stroke-dasharray="1 2"/><rect x="9" y="0" width="10" height="7" fill="#fff" stroke="#3a5f9a"/><rect x="9" y="0" width="10" height="2.500" fill="#3a5f9a"/></symbol>
<symbol id="n4" viewBox="0 0 20 20"><rect x="4" y="4" width="14" height="14" fill="#fff" stroke="#444" stroke-dasharray="1 2"/><path d="M9 1l1.500 3.500H14L11.500 7l1 3L9 8l-3.500 2 1-3L4 4.500h3.500z" fill="#f4e030"/></symbol>
<symbol id="n5" viewBox="0 0 20 20"><rect x="2" y="4" width="15" height="15" fill="none" stroke="#2a4f90" stroke-dasharray="1 2"/><circle cx="11" cy="6" r="4" fill="#2a4f90"/></symbol>
<symbol id="n6" viewBox="0 0 20 20"><path d="M4 3v14h12M4 10h6v7" stroke="#444" fill="none"/></symbol>
<symbol id="n7" viewBox="0 0 20 20"><rect x="2" y="2" width="16" height="16" fill="none" stroke="#888" stroke-dasharray="1 1"/><path d="M5 2v16M9 2v16M13 2v16M2 6h16M2 10h16M2 14h16" stroke="#888" stroke-dasharray="1 2"/><circle cx="13" cy="6" r="4" fill="#b05040"/><rect x="9" y="12" width="8" height="6" fill="#2a4f90"/></symbol>
<symbol id="n8" viewBox="0 0 20 20"><path d="M4 17V9a6 6 0 0 1 12 0v8h-4V9a2 2 0 0 0-4 0v8z" fill="#9aa4b8"/><rect x="4" y="13" width="4" height="4" fill="#d83020"/><rect x="12" y="13" width="4" height="4" fill="#2050c0"/></symbol>
<symbol id="n9" viewBox="0 0 20 20"><rect x="5" y="5" width="10" height="10" fill="none" stroke="#444" stroke-width="1.500"/></symbol>
<symbol id="o1" viewBox="0 0 20 20"><rect x="4" y="4" width="12" height="12" fill="none" stroke="#444"/><path d="M4 4l12 12M16 4L4 16" stroke="#444"/></symbol>
<symbol id="o2" viewBox="0 0 20 20"><path d="M5 4v12h10M5 10h5v6" stroke="#444" fill="none"/></symbol>
<symbol id="o3" viewBox="0 0 20 20"><path d="M4 16L16 4" stroke="#999"/><circle cx="10" cy="10" r="1.300" fill="#555"/></symbol>
<symbol id="o4" viewBox="0 0 20 20"><path d="M4 14L12 4M8 16l8-10" stroke="#999"/></symbol>
<symbol id="o5" viewBox="0 0 20 20"><path d="M4 4h12" stroke="#444"/><circle cx="10" cy="11" r="5" fill="none" stroke="#444"/></symbol>
<symbol id="o6" viewBox="0 0 20 20"><circle cx="10" cy="10" r="6.500" fill="none" stroke="#666"/><circle cx="10" cy="10" r="4" fill="none" stroke="#999" stroke-width="2"/></symbol>
<symbol id="o7" viewBox="0 0 20 20"><path d="M4 16L16 4M8 4l8 8M4 8l8 8" stroke="#999" stroke-dasharray="2 1"/></symbol>
<symbol id="o8" viewBox="0 0 20 20"><path d="M4 16l8-8M8 4l8 8" stroke="#999" stroke-dasharray="2 1"/></symbol>
<symbol id="o9" viewBox="0 0 20 20"><path d="M4 16L16 4M6 4l10 8" stroke="#999" stroke-dasharray="1 2"/></symbol>
<symbol id="q1" viewBox="0 0 20 20"><path d="M6 6h1M12 5h1M5 12h1M14 12h1M10 9h1M8 15h1M14 7h1" stroke="#888" stroke-width="1.500"/></symbol>
<symbol id="q2" viewBox="0 0 20 20"><path d="M2 2h16v16H2z" fill="none" stroke="#777" stroke-dasharray="1 1"/><path d="M5 2v16M9 2v16M13 2v16M2 6h16M2 10h16M2 14h16" stroke="#777" stroke-dasharray="1 1"/></symbol>
<symbol id="q3" viewBox="0 0 20 20"><path d="M3 3h14v14H3z" fill="none" stroke="#555" stroke-dasharray="2 1"/><path d="M6 6v8M10 6v8M14 6v8" stroke="#aaa" stroke-dasharray="1 2"/></symbol>
<symbol id="q4" viewBox="0 0 20 20"><path d="M3 15l4-8h10l-4 8zM3 12l4-8h10" fill="none" stroke="#444"/></symbol>
<symbol id="q5" viewBox="0 0 20 20"><rect x="4" y="8" width="12" height="4" fill="#888"/><path d="M3 6v8M17 6v8" stroke="#d01818" stroke-width="2"/></symbol>
<symbol id="q6" viewBox="0 0 20 20"><path d="M10 2v7" stroke="#444"/><rect x="6" y="9" width="8" height="8" fill="none" stroke="#444"/></symbol>
<symbol id="ar" viewBox="0 0 20 20"><path d="M6 8h8l-4 5z" fill="#333"/></symbol>
<symbol id="ag2" viewBox="0 0 20 20"><path d="M6 8h8l-4 5z" fill="#999"/></symbol>
</defs></svg>

<!-- TREE -->
<div id="tree">
<div class="r" style="line-height:18px"><svg style="left:2px" viewBox="0 0 16 16"><rect y="2" width="16" height="12" fill="#1d3f8f"/><path d="M0 7l16 5M0 11h16M8 2v12" stroke="#fff" fill="none"/></svg><span style="left:23px">RFEM</span></div>
<div class="r l0"><i></i><svg><use href="#rf"/></svg><span style="font-size:11px;letter-spacing:-.2px">19017_Element5_TRCA_Str_v30_no res (1).rf6</span></div>
<div class="r l0"><i class="o"></i><svg><use href="#rf"/></svg><span style="font-size:11px;font-weight:bold;letter-spacing:-.34px;color:#000">19017_Element5_TRCA_Str_v30_no res.rf6</span></div>
<div class="r l1"><i class="o"></i><svg><use href="#fx"/></svg><span>Basic Objects</span></div>
<div class="r l2"><i></i><svg><use href="#rm"/></svg><span>Materials</span></div>
<div class="r l2"><i></i><svg><use href="#se"/></svg><span>Sections</span></div>
<div class="r l2"><i></i><svg><use href="#th"/></svg><span>Thicknesses</span></div>
<div class="r l2"><i></i><svg><use href="#nd"/></svg><span>Nodes</span></div>
<div class="r l2"><i></i><svg><use href="#ln"/></svg><span>Lines</span></div>
<div class="r l2"><i></i><svg><use href="#me"/></svg><span>Members</span></div>
<div class="r l2"><i></i><svg><use href="#su"/></svg><span>Surfaces</span></div>
<div class="r l2"><i></i><svg><use href="#op"/></svg><span>Openings</span></div>
<div class="r l2"><svg><use href="#so"/></svg><span>Solids</span></div>
<div class="r l2"><svg><use href="#ls"/></svg><span>Line Sets</span></div>
<div class="r l2"><svg><use href="#ms"/></svg><span>Member Sets</span></div>
<div class="r l2"><svg><use href="#ss"/></svg><span>Surface Sets</span></div>
<div class="r l2"><svg><use href="#sd"/></svg><span>Solid Sets</span></div>
<div class="r l1"><i></i><svg><use href="#fo"/></svg><span>Special Objects</span></div>
<div class="r l1"><i></i><svg><use href="#fo"/></svg><span>Types for Nodes</span></div>
<div class="r l1"><i></i><svg><use href="#fo"/></svg><span>Types for Lines</span></div>
<div class="r l1"><i class="o"></i><svg><use href="#fx"/></svg><span>Types for Members</span></div>
<div class="r l2"><i></i><svg><use href="#hi"/></svg><span>Member Hinges</span></div>
<div class="r l2"><i></i><svg><use href="#ec"/></svg><span>Member Eccentricities</span></div>
<div class="r l2"><svg><use href="#sp"/></svg><span>Member Supports</span></div>
<div class="r l2"><svg><use href="#mo"/></svg><span>Member Openings</span></div>
<div class="r l2"><i></i><svg><use href="#sm"/></svg><span>Member Stiffness Modifications</span></div>
<div class="r l2"><svg><use href="#nl"/></svg><span>Member Nonlinearities</span></div>
<div class="r l2"><svg><use href="#md"/></svg><span>Member Definable Stiffnesses</span></div>
<div class="r l2"><svg><use href="#mr"/></svg><span>Member Result Intermediate Points</span></div>
<div class="r l2"><svg><use href="#mg"/></svg><span>Member Springs</span></div>
<div class="r l1"><i></i><svg><use href="#fo"/></svg><span>Types for Surfaces</span></div>
<div class="r l1"><i></i><svg><use href="#fo"/></svg><span>Types for Solids</span></div>
<div class="r l1"><i></i><svg><use href="#fo"/></svg><span>Types for Special Objects</span></div>
<div class="r l1"><i></i><svg><use href="#fo"/></svg><span>Imperfections</span></div>
<div class="r l1"><i class="o"></i><svg><use href="#fx"/></svg><span>Load Cases &amp; Combinations</span></div>
<div class="r l2"><i></i><svg><use href="#lc"/></svg><span>Load Cases</span></div>
<div class="r l2"><svg><use href="#ac"/></svg><span>Actions</span></div>
<div class="r l2"><i></i><svg><use href="#ad"/></svg><span>Design Situations</span></div>
<div class="r l2"><svg><use href="#ac"/></svg><span>Action Combinations</span></div>
<div class="r l2"><i></i><svg><use href="#ag"/></svg><span>Load Combinations</span></div>
<div class="r l2"><i></i><svg><use href="#ac"/></svg><span>Result Combinations</span></div>
<div class="r l2"><i></i><svg><use href="#st"/></svg><span>Static Analysis Settings</span></div>
<div class="r l2"><i></i><svg><use href="#mda"/></svg><span>Modal Analysis Settings</span></div>
<div class="r l2"><i></i><svg><use href="#cw"/></svg><span>Combination Wizards</span></div>
<div class="r l2"><svg><use href="#cw"/></svg><span>Relationship Between Load Cases</span></div>
<div class="r l1"><i></i><svg><use href="#fo"/></svg><span>Load Wizards</span></div>
<div class="r l1"><i></i><svg><use href="#fo"/></svg><span>Loads</span></div>
<div class="r l1"><i></i><svg><use href="#cd"/></svg><span>Calculation Diagrams</span></div>
<div class="r l1"><i></i><svg><use href="#fo"/></svg><span>Results</span></div>
<div class="r l1"><i></i><svg><use href="#fo"/></svg><span>Guide Objects</span></div>
<div class="r l1"><svg><use href="#fo"/></svg><span>Printout Reports</span></div>
</div>
<!-- nav bottom -->
<div class="p" style="left:37px;top:1133px;width:277px;height:26px;background:#f3f3f7;border-top:1px solid #c8c8d6;box-sizing:border-box"></div>
<div class="p" style="left:37px;top:1133px;width:38px;height:24px;background:#efeff3;border:1px solid #c8c8d6;box-sizing:border-box"></div>
<div class="p" style="left:75px;top:1133px;width:40px;height:24px;background:#efeff3;border:1px solid #c8c8d6;box-sizing:border-box"></div>
<div class="p" style="left:0;top:1159px;width:316px;height:1px;background:#c5c5d3"></div>
<svg class="p" style="left:8px;top:1136px" width="20" height="20"><path d="M1 6h7l2 2h8v9H1z" fill="#eec24a" stroke="#a08020"/><rect x="8" y="2" width="11" height="8" fill="#fff" stroke="#3a5f9a"/><rect x="8" y="2" width="11" height="3" fill="#3a5f9a"/><path d="M8 17l5-5 6 3-3 4z" fill="#6f9ad8"/><circle cx="8" cy="16" r="1.500" fill="#d01818"/></svg>
<svg class="p" style="left:47px;top:1138px" width="20" height="14"><path d="M1 7c4-8 14-8 18 0-4 7-14 7-18 0z" fill="#dfe3f2" stroke="#2a3f7f" stroke-width="1.300"/><circle cx="10" cy="7" r="3.800" fill="#2a3f7f"/></svg>
<svg class="p" style="left:87px;top:1140px" width="16" height="12"><rect width="11" height="10" y="1" rx="2" fill="#666"/><path d="M11 5l5-3v8l-5-3z" fill="#666"/></svg>

<!-- Bottom toolbar bg + status -->
<div class="p" style="left:0;top:1160px;width:1600px;height:25px;background:#f7f7f9"></div>
<div class="p" style="left:0;top:1185px;width:1600px;height:15px;background:#e8e8f2"></div>
<div class="p" style="left:21px;top:1162px;width:182px;height:21px;background:#e6e7f0"></div>
<div class="p" style="left:26px;top:1167px;width:11px;height:11px;background:#ccfdff"></div>
<div class="t" style="left:42px;top:1166px">1 - Global XYZ</div>
<svg class="p" style="left:188px;top:1169px" width="12" height="8"><path d="M1 1l5 5 5-5" stroke="#666" fill="none"/></svg>
<div class="p" style="left:977px;top:1185px;width:1px;height:15px;background:#d0d0da"></div>
<div class="p" style="left:1083px;top:1185px;width:1px;height:15px;background:#d0d0da"></div>
<div class="p" style="left:1289px;top:1185px;width:1px;height:15px;background:#d0d0da"></div>
<div class="p" style="left:1355px;top:1185px;width:1px;height:15px;background:#d0d0da"></div>
<div class="p" style="left:1431px;top:1185px;width:1px;height:15px;background:#d0d0da"></div>
<div class="p" style="left:1583px;top:1185px;width:1px;height:15px;background:#d0d0da"></div>
<div class="t" style="left:1088px;top:1187px">CS: Global XYZ</div>
<div class="t" style="left:1294px;top:1187px">Plane: XY</div>

<!-- Materials panel -->
<div class="p" style="left:320px;top:943px;width:1280px;height:21px;background:#d6e4f1"></div>
<div class="p" style="left:320px;top:964px;width:1280px;height:172px;background:#f1f1f3"></div>
<div class="t" style="left:326px;top:946px;color:#2d3850">Materials</div>
<svg class="p" style="left:1562px;top:946px" width="36" height="14"><rect x="3.500" y="4.500" width="7" height="7" fill="none" stroke="#333"/><rect x="6" y="2" width="7" height="7" fill="#d6e4f1" stroke="#333"/><path d="M23 3l7 8M30 3l-7 8" stroke="#333" stroke-width="1.800"/></svg>
<div class="t" style="left:328px;top:967px">Go To</div><div class="t" style="left:374px;top:967px">Edit</div><div class="t" style="left:410px;top:967px">Selection</div><div class="t" style="left:473px;top:967px">View</div><div class="t" style="left:514px;top:967px">Settings</div>
<div class="p" style="left:320px;top:983px;width:1161px;height:1px;background:#dcdce2"></div>
<div class="p" style="left:322px;top:986px;width:211px;height:21px;background:#e6e7f0"></div>
<div class="p" style="left:522px;top:986px;width:16px;height:21px;background:#ccc"></div>
<div class="p" style="left:538px;top:986px;width:17px;height:21px;background:#eee"></div>
<svg class="p" style="left:326px;top:988px" width="16" height="16"><rect x=".5" y=".5" width="15" height="15" fill="#f0f6ee" stroke="#6a8a7a"/><rect x=".5" y=".5" width="15" height="4" fill="#3a5f7a"/><path d="M2 14L13 5v9z" fill="#9fd67a"/></svg>
<div class="t" style="left:346px;top:990px">Structure</div>
<svg class="p" style="left:509px;top:993px" width="12" height="8"><path d="M1 1l5 5 5-5" stroke="#666" fill="none"/></svg>
<svg class="p" style="left:527px;top:992px" width="6" height="10"><path d="M5 0L0 5l5 5z" fill="#333"/></svg>
<div class="p" style="left:565px;top:986px;width:270px;height:21px;background:#e6e7f0"></div>
<div class="p" style="left:836px;top:986px;width:15px;height:21px;background:#e9e9ef"></div>
<div class="p" style="left:853px;top:986px;width:15px;height:21px;background:#eee"></div>
<svg class="p" style="left:570px;top:988px" width="16" height="16"><use href="#me"/></svg>
<div class="t" style="left:589px;top:990px">Basic Objects</div>
<svg class="p" style="left:815px;top:993px" width="12" height="8"><path d="M1 1l5 5 5-5" stroke="#666" fill="none"/></svg>
<svg class="p" style="left:841px;top:992px" width="6" height="10"><path d="M5 0L0 5l5 5z" fill="#333"/></svg>
<svg class="p" style="left:858px;top:992px" width="6" height="10"><path d="M1 0l5 5-5 5z" fill="#111"/></svg>

<!-- table -->
<table>
<colgroup><col style="width:60px"><col style="width:250px"><col style="width:140px"><col style="width:201px"><col style="width:100px"><col style="width:99px"><col style="width:100px"><col style="width:101px"><col style="width:100px"><col style="width:100px"><col style="width:13px"></colgroup>
<tr><th style="height:9px;background:#dcdcdc"></th><th style="background:#dcdcdc"></th><th style="background:#dcdcdc"></th><th style="background:#dcdcdc"></th><th style="background:#dcdcdc"></th><th style="background:#dcdcdc"></th><th style="background:#dcdcdc"></th><th style="background:#dcdcdc"></th><th style="background:#dcdcdc"></th><th style="background:#dcdcdc"></th><th style="background:#dcdcdc"></th></tr>
<tr style="height:31px"><th>Material<br>No.</th><th>Material Name</th><th>Material<br>Type</th><th>Material Model</th><th>Modulus of Elast.<br>E [ksi]</th><th>Shear Modulus<br>G [ksi]</th><th>Poisson's Ratio<br>ν [--]</th><th>Specific Weight<br>γ [lbf/ft³]</th><th>Mass Density<br>ρ [lb/ft³]</th><th>Coeff. of Th. Exp.<br>α [1/°F]</th><th></th></tr>
<tr class="bd"><td class="n">9</td><td class="b"><s style="background:#e8c49e"></s>CLT 200 5s</td><td class="b"><s style="background:#6fa800"></s>Timber</td><td class="b"><s style="background:#8080f0"></s>Orthotropic | Linear Elastic (Surf...</td><td class="v b c">1595.415</td><td class="c"></td><td class="c"></td><td class="v b">35.012</td><td class="v b">34.34</td><td class="v b">0.000003</td><td class="pc"><b>%</b></td></tr>
<tr class="bd"><td class="n">10</td><td></td><td></td><td></td><td></td><td></td><td class="c"></td><td></td><td></td><td></td><td></td></tr>
<tr class="bd"><td class="n">11</td><td><s style="background:#e67a3c"></s>GL28h</td><td><s style="background:#6fa800"></s>Timber</td><td><s style="background:#c5f3f3"></s>Isotropic | Linear Elastic</td><td class="v c">1827.475</td><td class="v c">94.275</td><td class="c"></td><td class="v">29.283</td><td class="v">28.72</td><td class="v">0.000003</td><td class="pc"><b>%</b></td></tr>
<tr class="bd"><td class="n">12</td><td class="b"><s style="background:#1f9d8f"></s>load patch</td><td class="b"><s style="background:#6fa800"></s>Timber</td><td class="b"><s style="background:#8a8aff"></s>Orthotropic | Linear Elastic (Surf...</td><td class="v b c">1595.415</td><td class="c"></td><td class="c"></td><td class="v b">0.637</td><td class="v b">0.62</td><td class="v b">0.000003</td><td class="pc"><b>%</b></td></tr>
</table>
<div class="p" style="left:320px;top:1119px;width:1264px;height:17px;background:#f1f1f3"></div>
<div class="p" style="left:338px;top:1127px;width:1117px;height:2px;background:#888"></div>
<div class="p" style="left:1592px;top:1055px;width:2px;height:18px;background:#888"></div>
<!-- pager/tabs -->
<svg class="p" style="left:322px;top:1142px" width="122" height="12"><path d="M8 1v10M15 1l-6 5 6 5z" fill="#888" stroke="#888"/><path d="M28 1l-6 5 6 5z" fill="#888"/><path d="M94 1l6 5-6 5z" fill="#666"/><path d="M111 1l6 5-6 5z" fill="#666"/><path d="M118 1v10" stroke="#666"/></svg>
<div class="t" style="left:366px;top:1142px">1 of 14</div>
<div class="tab" style="left:446px;width:64px;background:#fff;height:25px;border-bottom:0">Materials</div>
<div class="tab" style="left:510px;width:61px">Sections</div>
<div class="tab" style="left:570px;width:78px">Thicknesses</div>
<div class="tab" style="left:647px;width:62px">Nodes</div>
<div class="tab" style="left:708px;width:62px">Lines</div>
<div class="tab" style="left:769px;width:64px">Members</div>
<div class="tab" style="left:832px;width:62px">Surfaces</div>
<div class="tab" style="left:893px;width:68px">Openings</div>
<div class="tab" style="left:960px;width:62px">Solids</div>
<div class="tab" style="left:1021px;width:62px">Line Sets</div>
<div class="tab" style="left:1082px;width:83px">Member Sets</div>
<div class="tab" style="left:1164px;width:79px">Surface Sets</div>
<div class="tab" style="left:1242px;width:67px">Solid Sets</div>
<div class="tab" style="left:1308px;width:64px">Formulas</div>
<div class="p" style="left:320px;top:1159px;width:1280px;height:1px;background:#d8d8e0"></div>

<!-- all toolbar icons -->
<svg class="p" style="left:0;top:0" width="1600" height="1200">
<g fill="#cfe6f8" stroke="#8cc4ea">
<rect x="342.500" y="48.500" width="24" height="24" rx="3"/><rect x="368.500" y="48.500" width="24" height="24" rx="3"/><rect x="1004.500" y="48.500" width="24" height="24" rx="3"/><rect x="1204.500" y="76.500" width="24" height="24" rx="3"/>
<rect x="876.500" y="985.500" width="24" height="23" rx="3"/>
<rect x="1077.500" y="1161.500" width="23" height="22" rx="3"/><rect x="1145.500" y="1161.500" width="23" height="22" rx="3"/><rect x="1169.500" y="1161.500" width="23" height="22" rx="3"/><rect x="1193.500" y="1161.500" width="23" height="22" rx="3"/><rect x="1218.500" y="1161.500" width="23" height="22" rx="3"/><rect x="1266.500" y="1161.500" width="23" height="22" rx="3"/><rect x="1481.500" y="1161.500" width="22" height="22" rx="3"/><rect x="1505.500" y="1161.500" width="22" height="22" rx="3"/><rect x="1530.500" y="1161.500" width="22" height="22" rx="3"/><rect x="1553.500" y="1161.500" width="22" height="22" rx="3"/><rect x="1577.500" y="1161.500" width="22" height="22" rx="3"/>
</g>
<!-- separators -->
<g fill="#bcbcc6">
<rect x="255" y="51" width="1" height="18"/><rect x="337" y="51" width="1" height="18"/><rect x="525" y="49" width="1" height="24"/><rect x="604" y="49" width="1" height="24"/><rect x="1225" y="51" width="1" height="18"/><rect x="1293" y="49" width="1" height="24"/><rect x="1412" y="51" width="1" height="18"/><rect x="1572" y="51" width="1" height="18"/>
<rect x="148" y="79" width="1" height="18"/><rect x="233" y="79" width="1" height="18"/><rect x="418" y="79" width="1" height="18"/><rect x="462" y="79" width="1" height="18"/><rect x="649" y="77" width="1" height="24"/><rect x="687" y="79" width="1" height="18"/><rect x="772" y="79" width="1" height="18"/><rect x="909" y="79" width="1" height="18"/><rect x="1098" y="79" width="1" height="18"/><rect x="1141" y="77" width="1" height="24"/><rect x="1285" y="79" width="1" height="18"/>
<rect x="206" y="1164" width="1" height="18"/><rect x="333" y="1164" width="1" height="18"/><rect x="497" y="1164" width="1" height="18"/><rect x="575" y="1164" width="1" height="18"/><rect x="834" y="1164" width="1" height="18"/>
<rect x="557" y="986" width="1" height="21"/><rect x="930" y="986" width="1" height="21"/><rect x="1066" y="988" width="1" height="18"/><rect x="1100" y="988" width="1" height="18"/><rect x="1210" y="988" width="1" height="18"/><rect x="1244" y="988" width="1" height="18"/><rect x="1354" y="988" width="1" height="18"/><rect x="1387" y="988" width="1" height="18"/><rect x="1418" y="985" width="1" height="23"/><rect x="1450" y="988" width="1" height="18"/>
</g>
<!-- toolbar 1 -->
<g id="T1" transform="translate(0,50)">
<use href="#c1" x="8" width="20" height="20"/><use href="#a2" x="34" width="20" height="20"/><use href="#a3" x="60" width="20" height="20"/><use href="#a4" x="87" width="20" height="20"/><use href="#a5" x="112" width="20" height="20"/><use href="#a6" x="138" width="20" height="20"/><use href="#a7" x="163" width="20" height="20"/><use href="#ar" x="181" width="20" height="20"/><use href="#a1" x="202" width="20" height="20"/><use href="#a1" x="230" width="20" height="20"/><use href="#a8" x="260" width="20" height="20"/><use href="#ag2" x="279" width="20" height="20"/><use href="#a9" x="298" width="20" height="20"/><use href="#ag2" x="317" width="20" height="20"/><use href="#b1" x="344" width="20" height="20"/><use href="#b2" x="370" width="20" height="20"/><use href="#b3" x="397" width="20" height="20"/><use href="#b4" x="423" width="20" height="20"/><use href="#b5" x="448" width="20" height="20"/><use href="#b6" x="474" width="20" height="20"/><use href="#b7" x="500" width="20" height="20"/><use href="#b8" x="540" width="20" height="20"/><use href="#ar" x="556" width="20" height="20"/><use href="#b9" x="574" width="20" height="20"/><use href="#c1" x="610" width="20" height="20"/><use href="#c1" x="636" width="20" height="20"/>
<use href="#g4" x="968" width="20" height="20"/><use href="#ar" x="985" width="20" height="20"/><use href="#g5" x="1006" width="20" height="20"/><use href="#g6" x="1032" width="20" height="20"/><use href="#g7" x="1056" width="20" height="20"/><use href="#g6" x="1083" width="20" height="20"/><use href="#g9" x="1109" width="20" height="20"/><use href="#h1" x="1137" width="20" height="20"/><use href="#ar" x="1153" width="20" height="20"/><use href="#h2" x="1176" width="20" height="20"/><use href="#h3" x="1200" width="20" height="20"/><use href="#h4" x="1233" width="20" height="20"/><use href="#h5" x="1258" width="20" height="20"/><use href="#ar" x="1277" width="20" height="20"/><use href="#h6" x="1309" width="20" height="20"/><use href="#h7" x="1333" width="20" height="20"/><use href="#h8" x="1360" width="20" height="20"/><use href="#h9" x="1384" width="20" height="20"/><use href="#i1" x="1417" width="20" height="20"/><use href="#i2" x="1443" width="20" height="20"/><use href="#i3" x="1470" width="20" height="20"/><use href="#i4" x="1494" width="20" height="20"/><use href="#ar" x="1514" width="20" height="20"/><use href="#i5" x="1535" width="20" height="20"/><use href="#ar" x="1552" width="20" height="20"/>
</g>
<!-- toolbar 2 -->
<g transform="translate(0,78)">
<use href="#c2" x="9" width="20" height="20"/><use href="#ar" x="26" width="20" height="20"/><use href="#c3" x="45" width="20" height="20"/><use href="#c4" x="69" width="20" height="20"/><use href="#ar" x="89" width="20" height="20"/><use href="#c5" x="111" width="20" height="20"/><use href="#ar" x="129" width="20" height="20"/><use href="#c6" x="152" width="20" height="20"/><use href="#c7" x="180" width="20" height="20"/><use href="#c7" x="207" width="20" height="20"/><use href="#c8" x="240" width="20" height="20"/><use href="#ar" x="259" width="20" height="20"/><use href="#c9" x="278" width="20" height="20"/><use href="#ar" x="296" width="20" height="20"/><use href="#d1" x="315" width="20" height="20"/><use href="#ar" x="334" width="20" height="20"/><use href="#d2" x="353" width="20" height="20"/><use href="#ar" x="373" width="20" height="20"/><use href="#d3" x="392" width="20" height="20"/><use href="#d4" x="424" width="20" height="20"/><use href="#ag2" x="443" width="20" height="20"/><use href="#c2" x="469" width="20" height="20"/><use href="#d5" x="495" width="20" height="20"/><use href="#d5" x="522" width="20" height="20"/><use href="#d5" x="549" width="20" height="20"/><use href="#d5" x="574" width="20" height="20"/><use href="#ar" x="593" width="20" height="20"/><use href="#d5" x="611" width="20" height="20"/><use href="#ar" x="630" width="20" height="20"/><use href="#d6" x="661" width="20" height="20"/><use href="#d7" x="694" width="20" height="20"/><use href="#d8" x="721" width="20" height="20"/><use href="#d9" x="745" width="20" height="20"/><use href="#e1" x="778" width="20" height="20"/><use href="#e2" x="805" width="20" height="20"/><use href="#e3" x="831" width="20" height="20"/><use href="#e4" x="855" width="20" height="20"/><use href="#e5" x="883" width="20" height="20"/><use href="#e6" x="915" width="20" height="20"/><use href="#e7" x="942" width="20" height="20"/><use href="#e7" x="968" width="20" height="20"/><use href="#e8" x="993" width="20" height="20"/><use href="#e9" x="1020" width="20" height="20"/><use href="#f1" x="1045" width="20" height="20"/><use href="#f2" x="1071" width="20" height="20"/><use href="#f3" x="1105" width="20" height="20"/><use href="#ag2" x="1123" width="20" height="20"/><use href="#f4" x="1155" width="20" height="20"/><use href="#f5" x="1180" width="20" height="20"/><use href="#f6" x="1206" width="20" height="20"/><use href="#f6" x="1232" width="20" height="20"/><use href="#f6" x="1258" width="20" height="20"/><use href="#f8" x="1292" width="20" height="20"/><use href="#f9" x="1316" width="20" height="20"/><use href="#g1" x="1341" width="20" height="20"/><use href="#g2" x="1369" width="20" height="20"/><use href="#g3" x="1394" width="20" height="20"/>
</g>
<!-- panel toolbar -->
<g transform="translate(0,987)">
<use href="#d6" x="878" width="20" height="20"/><use href="#d6" x="902" width="20" height="20"/><use href="#j1" x="936" width="20" height="20"/><use href="#j1" x="962" width="20" height="20"/><use href="#j2" x="988" width="20" height="20"/><use href="#j3" x="1014" width="20" height="20"/><use href="#j2" x="1040" width="20" height="20"/><use href="#j4" x="1073" width="20" height="20"/><use href="#j5" x="1106" width="20" height="20"/><use href="#j5" x="1132" width="20" height="20"/><use href="#j5" x="1158" width="20" height="20"/><use href="#j5" x="1184" width="20" height="20"/><use href="#j6" x="1217" width="20" height="20"/><use href="#j7" x="1250" width="20" height="20"/><use href="#j8" x="1277" width="20" height="20"/><use href="#j8" x="1302" width="20" height="20"/><use href="#j9" x="1328" width="20" height="20"/><use href="#k1" x="1361" width="20" height="20"/><use href="#k2" x="1394" width="20" height="20"/><use href="#k3" x="1423" width="20" height="20"/><use href="#k4" x="1457" width="20" height="20"/>
</g>
<!-- bottom toolbar -->
<g transform="translate(0,1163)">
<use href="#h4" x="1" width="20" height="20"/><use href="#d3" x="212" width="20" height="20"/><use href="#d3" x="236" width="20" height="20"/><use href="#d3" x="259" width="20" height="20"/><use href="#d3" x="285" width="20" height="20"/><use href="#d3" x="307" width="20" height="20"/><use href="#l1" x="339" width="20" height="20"/><use href="#l1" x="363" width="20" height="20"/><use href="#l2" x="386" width="20" height="20"/><use href="#ar" x="404" width="20" height="20"/><use href="#l3" x="422" width="20" height="20"/><use href="#l4" x="447" width="20" height="20"/><use href="#l5" x="470" width="20" height="20"/><use href="#l6" x="501" width="20" height="20"/><use href="#ar" x="519" width="20" height="20"/><use href="#l7" x="537" width="20" height="20"/><use href="#ar" x="555" width="20" height="20"/><use href="#l8" x="581" width="20" height="20"/><use href="#l9" x="603" width="20" height="20"/><use href="#m1" x="627" width="20" height="20"/><use href="#ar" x="646" width="20" height="20"/><use href="#m2" x="665" width="20" height="20"/><use href="#m2" x="690" width="20" height="20"/><use href="#m3" x="712" width="20" height="20"/><use href="#m4" x="735" width="20" height="20"/><use href="#m4" x="760" width="20" height="20"/><use href="#m5" x="785" width="20" height="20"/><use href="#m6" x="809" width="20" height="20"/><use href="#m7" x="841" width="20" height="20"/><use href="#ar" x="858" width="20" height="20"/><use href="#n1" x="875" width="20" height="20"/><use href="#n1" x="899" width="20" height="20"/><use href="#n1" x="924" width="20" height="20"/>
<use href="#n2" x="968" width="20" height="20"/><use href="#n3" x="999" width="20" height="20"/><use href="#n2" x="1025" width="20" height="20"/><use href="#n4" x="1053" width="20" height="20"/><use href="#n5" x="1080" width="20" height="20"/><use href="#n6" x="1114" width="20" height="20"/><use href="#n7" x="1147" width="20" height="20"/><use href="#n8" x="1170" width="20" height="20"/><use href="#n9" x="1194" width="20" height="20"/><use href="#o1" x="1219" width="20" height="20"/><use href="#o1" x="1242" width="20" height="20"/><use href="#o2" x="1266" width="20" height="20"/><use href="#o3" x="1289" width="20" height="20"/><use href="#o4" x="1313" width="20" height="20"/><use href="#o5" x="1337" width="20" height="20"/><use href="#o6" x="1362" width="20" height="20"/><use href="#o7" x="1386" width="20" height="20"/><use href="#o8" x="1409" width="20" height="20"/><use href="#o9" x="1433" width="20" height="20"/><use href="#q1" x="1457" width="20" height="20"/><use href="#q2" x="1482" width="20" height="20"/><use href="#q3" x="1506" width="20" height="20"/><use href="#q4" x="1531" width="20" height="20"/><use href="#q5" x="1554" width="20" height="20"/><use href="#q6" x="1578" width="20" height="20"/>
</g>
</svg>

<!-- combo on toolbar 1 (drawn over icons layer) -->
<div class="p" style="left:663px;top:49px;width:270px;height:22px;background:#e6e7f0"></div>
<div class="p" style="left:667px;top:50px;width:12px;height:18px;background:#ccfdff"></div>
<div class="p" style="left:681px;top:50px;width:12px;height:18px;background:#ccfdff"></div>
<div class="p" style="left:695px;top:51px;width:30px;height:17px;background:#000"></div>
<div class="t" style="left:706px;top:53px;color:#fff">D</div>
<div class="t" style="left:731px;top:53px">LC1</div>
<div class="p" style="left:761px;top:51px;width:1px;height:18px;background:#d4d4de"></div>
<div class="t" style="left:768px;top:53px">DL</div>
<svg class="p" style="left:916px;top:56px" width="12" height="8"><path d="M1 1l5 5 5-5" stroke="#666" fill="none"/></svg>
<div class="p" style="left:934px;top:49px;width:14px;height:22px;background:#cfcfcf"></div>
<div class="p" style="left:949px;top:49px;width:14px;height:22px;background:#eee"></div>
<svg class="p" style="left:938px;top:55px" width="6" height="10"><path d="M5 0L0 5l5 5z" fill="#333"/></svg>
<svg class="p" style="left:954px;top:55px" width="6" height="10"><path d="M1 0l5 5-5 5z" fill="#111"/></svg>
<div class="t" style="left:1586px;top:53px;color:#555">»</div>

<!-- Avatar -->
<svg class="p" style="left:1515px;top:1098px;z-index:6" width="54" height="54" viewBox="0 0 54 54"><defs><clipPath id="av"><circle cx="27" cy="27" r="26"/></clipPath></defs><g clip-path="url(#av)"><rect width="54" height="54" fill="#e3e6f0"/><path d="M6 54c2-10 12-12 21-12s19 2 21 12z" fill="#4a769f"/><path d="M20 44l7 6 7-6-3-5h-8z" fill="#e3b49a"/><ellipse cx="27" cy="21" rx="17" ry="18" fill="#8a6a46"/><circle cx="11" cy="20" r="5" fill="#9a7a52"/><circle cx="43" cy="20" r="5" fill="#9a7a52"/><circle cx="14" cy="10" r="5" fill="#9a7a52"/><circle cx="40" cy="10" r="5" fill="#9a7a52"/><circle cx="27" cy="6" r="6" fill="#a0835a"/><ellipse cx="12" cy="30" rx="5" ry="9" fill="#8a6a44"/><ellipse cx="42" cy="30" rx="5" ry="9" fill="#8a6a44"/><ellipse cx="27" cy="27" rx="11" ry="14" fill="#e4b69a"/><path d="M16 20c4-7 18-7 22 0-6-3-16-3-22 0z" fill="#9a7a52"/><rect x="17" y="23" width="9" height="5.500" rx="1.500" fill="#6a7aa8" fill-opacity=".35" stroke="#25325f" stroke-width="1.200"/><rect x="28" y="23" width="9" height="5.500" rx="1.500" fill="#6a7aa8" fill-opacity=".35" stroke="#25325f" stroke-width="1.200"/><path d="M22 35c3 2 7 2 10 0" stroke="#b04a48" stroke-width="1.500" fill="none"/></g></svg>

<!-- 3D structure overlay -->
<svg class="p" style="left:0;top:0;z-index:5" width="1600" height="1200">
<defs>
<filter id="sh" x="-20%" y="-20%" width="140%" height="140%"><feGaussianBlur stdDeviation="30"/></filter>
<linearGradient id="cg"><stop offset=".08" stop-color="#834c0d"/><stop offset=".08" stop-color="#bb660e"/></linearGradient>
<linearGradient id="cg2"><stop offset=".5" stop-color="#834c0d"/><stop offset=".5" stop-color="#c26c10"/></linearGradient>
<linearGradient id="cg3"><stop offset=".6" stop-color="#834c0d"/><stop offset=".6" stop-color="#b9650e"/></linearGradient>
<linearGradient id="cg4"><stop offset=".28" stop-color="#834c0d"/><stop offset=".28" stop-color="#bb660e"/></linearGradient>
<linearGradient id="bg"><stop offset=".55" stop-color="#66a8cf"/><stop offset=".55" stop-color="#85dcfb"/></linearGradient>
<g id="rb">
<polygon class="b" points="1034,603 1540,487 1540,548 1034,662"/>
<polygon class="d" points="1034,603 1540,487 1540,495 1034,611"/>
<polygon class="d" points="1052,620 1117,640 1117,645 1052,629"/><path class="l" d="M1052 618L1117 638"/>
<polygon class="d" points="1154,595 1225,617 1225,622 1154,604"/><path class="l" d="M1154 593L1225 615"/>
<polygon class="d" points="1253,574 1327,595 1327,600 1253,583"/><path class="l" d="M1253 572L1327 593"/>
<polygon class="d" points="1355,549 1431,572 1431,577 1355,558"/><path class="l" d="M1355 547L1431 570"/>
<path class="tl" d="M1371 547L1431 530"/>
<rect x="1043" y="601" width="13" height="30" fill="url(#cg3)"/><rect x="1146" y="578" width="12" height="24" fill="url(#cg3)"/><rect x="1247" y="555" width="12" height="25" fill="url(#cg3)"/><rect x="1348" y="530" width="12" height="25" fill="url(#cg3)"/>
</g>
<g id="fb"><polygon class="e" points="1034,660 1541,544 1541,572 1034,690"/><path class="l" d="M1034 660L1541 544"/></g>
<g id="fl">
<polygon class="d" points="452,650 537,681 537,691 452,660"/><path class="l" d="M452 647L537 678"/>
<polygon class="d" points="553,684 623,707 623,717 553,694"/><path class="l" d="M553 682L623 705"/>
</g>
<g id="lb"><polygon class="e" points="447,703 538,733 538,746 447,717"/><polygon class="d" points="447,707 538,737 538,746 447,717"/><path class="l" d="M447 703L538 733"/><polygon class="d" points="548,735 625,760 625,773 548,747"/><path class="l" d="M548 735L625 760"/>
<polygon class="d" points="378,682 438,698 438,718 378,695"/><path class="l" d="M378 682L438 698"/></g>
<g id="rc"><polygon class="d" points="647,715 707,735 707,741 647,724"/><path class="l" d="M647 713L707 733"/><polygon class="e" points="652,707 722,690 722,696 652,712"/><path class="l" d="M652 710L722 693"/>
<polygon class="d" points="770,695 825,714 825,720 770,703"/><path class="l" d="M770 693L825 712"/><rect x="639" y="694" width="11" height="20" fill="url(#cg3)"/><rect x="738" y="672" width="12" height="22" fill="url(#cg3)"/></g>
<g id="f1b"><path d="M801 246L840 221L991 251L932 273ZM876 227L846 250M875 227L958 258M805 378L905 403M825 338L926 358M844 324L926 340M857 338L881 333"/></g>
<g id="f3b"><path d="M1015 292L1084 266L1204 305L1117 323ZM1043 280L1149 313M1015 430L1112 460M1043 356L1110 378M1043 356L1082 343L1147 365M1123 378L1158 370M1121 380L1151 393M1156 391L1199 381M1160 368L1199 380"/></g>
<g id="f2b"><path d="M562 413L599 390L710 409M642 433L710 409L799 436L716 456ZM562 413L642 433M684 420L760 443M610 422L640 396M649 509L671 498M649 512L710 536M684 496L755 518M681 520L722 511M722 531L760 522M727 549L792 570M566 500L590 508"/></g>
</defs>

<!-- ground shadow -->
<polygon points="285,790 1200,760 1540,880 1310,1000 830,1130 610,1130 345,1010" fill="#000" fill-opacity=".16" filter="url(#sh)"/>

<!-- back top right -->
<polygon class="e" points="1206,352 1329,305 1340,313 1340,412 1318,405 1318,333 1238,365"/>
<polygon class="e" points="1262,372 1318,385 1340,405 1300,392"/>
<rect x="1249" y="346" width="13" height="26" fill="url(#cg3)"/>
<!-- left back stuff -->
<rect x="302" y="690" width="11" height="120" fill="url(#cg3)"/>
<rect x="405" y="620" width="12" height="253" fill="url(#cg3)"/>
<rect x="425" y="780" width="12" height="127" fill="url(#cg3)"/>
<polygon class="b" points="320,600 445,630 445,725 320,680"/>
<polygon class="b" points="267,750 310,713 378,730 378,772 320,765"/>
<polygon class="e" points="265,650 320,605 330,612 276,655"/>
<polygon class="h" points="268,655 300,628 325,640 300,662"/>
<polygon class="b" points="383,770 445,790 445,880 383,848"/>
<polygon fill="#ececec" points="405,800 425,806 425,838 405,832"/>
<polygon fill="#fff" points="340,660 367,668 367,680 322,666"/>

<!-- roof -->
<polygon class="b" points="725,252 870,272 925,290 985,315 1015,289 1097,260 1329,303 1204,353 1351,403 1540,462 1034,578 1034,592 910,622 908,608 632,672 443,613 377,597 255,575"/>
<!-- roof edges -->
<polygon class="d" points="728,260 738,270 292,583 264,577"/>
<polygon class="h" points="725,252 727,259 264,577 255,575"/>
<polygon class="d" points="728,256 870,276 925,294 925,300 740,270"/>
<path class="l" d="M725 252L870 272L925 290"/>
<polygon class="d" points="1097,262 1329,305 1300,320 1120,275 1040,293"/>
<path d="M1097 260L1329 303" stroke="#e8800f" stroke-width="2.500" fill="none"/>
<path d="M1329 303L1206 353" stroke="#e8800f" stroke-width="4" fill="none"/>
<polygon class="d" points="1184,352 1335,400 1335,412 1184,367"/>
<path class="l" d="M1184 352L1335 400"/>
<!-- roof ledges -->
<g class="d">
<polygon points="679,292 814,305 814,310 692,303"/>
<polygon points="629,327 794,343 794,349 640,340"/>
<polygon points="582,358 798,382 798,388 594,371"/>
<polygon points="532,388 757,412 757,418 546,400"/>
<polygon points="482,420 630,445 632,473 590,445 494,433"/>
<polygon points="434,455 553,468 553,474 446,467"/>
<polygon points="385,487 515,500 515,506 398,500"/>
<polygon points="337,523 462,537 462,543 350,536"/>
<polygon points="308,540 421,562 421,569 322,553"/>
<polygon points="515,502 610,518 640,570 625,532 515,512"/>
<polygon points="465,538 640,570 640,582 478,550"/>
<polygon points="432,560 540,595 640,630 716,650 640,638 540,604 432,570"/>
<polygon points="642,575 818,627 760,612 640,585"/>
</g>
<g class="l">
<path d="M679 292L814 305M629 327L794 343M582 358L798 382M532 388L757 412M482 420L558 427M434 455L553 468M385 487L515 500M337 523L462 537M308 540L421 562M465 538L640 570M432 560L716 650M744 605L818 627"/>
</g>
<polygon class="h" points="515,500 520,505 471,540 440,562 385,600 374,595 432,557 465,533"/>
<!-- teal slab lines -->
<g class="tl">
<path d="M657 400L690 370M600 425L625 400M725 375L760 340M690 365L720 340M560 450L590 430M455 490L480 470M500 480L530 455M470 510L500 490M345 527L378 505M395 525L430 505M420 575L500 590M510 520L560 505M600 515L650 495M640 535L680 520M545 610L640 590M712 560L650 590M655 615L740 592M850 505L830 520M790 565L870 530M770 690L837 662M825 590L910 610L1033 590M830 590L880 580M860 585L940 610"/>
</g>
<!-- center ridges -->
<polygon class="d" points="926,360 998,374 1010,410 930,372"/>
<polygon class="h" points="1006,330 1010,336 764,417 758,411"/>
<polygon class="d" points="1002,375 772,458 772,468 1002,385"/>
<polygon class="h" points="1002,368 1004,375 772,458 768,452"/>
<polygon class="d" points="805,515 952,455 952,465 805,525"/>
<polygon class="h" points="805,510 952,450 953,456 807,516"/>
<polygon class="d" points="766,465 874,487 874,497 766,475"/>
<path class="l" d="M766 463L874 483M846 433L874 447M805 512L922 537"/>
<polygon class="d" points="805,514 922,539 922,546 805,522"/>
<polygon class="h" points="766,575 930,531 932,537 768,582"/>
<polygon class="d" points="766,582 930,537 930,548 766,592"/>
<polygon class="e" points="840,565 930,545 932,553 842,575"/>
<polygon class="h" points="840,560 930,540 932,546 842,566"/>
<polygon class="h" points="744,603 822,583 824,590 746,610"/>
<polygon class="e" points="746,610 824,590 824,597 746,617"/>
<polygon class="h" points="900,560 1047,530 1048,536 902,566"/>
<polygon class="e" points="900,566 1048,536 1048,545 900,575"/>
<polygon class="h" points="900,550 998,520 999,526 900,556"/>
<polygon class="e" points="900,556 999,526 999,535 900,565"/>
<polygon class="d" points="952,452 1021,520 1012,520 950,465"/>
<polygon class="d" points="1050,535 1121,560 1121,566 1050,543"/><path class="l" d="M1050 533L1121 558"/>
<!-- right roof ledges -->
<polygon class="d" points="1047,480 1149,510 1225,534 1225,540 1149,517 1047,490"/><path class="l" d="M1047 478L1225 532"/>
<polygon class="d" points="1154,458 1251,489 1325,512 1325,518 1251,496 1154,468"/><path class="l" d="M1154 456L1325 510"/>
<polygon class="d" points="1251,434 1353,464 1427,489 1427,495 1353,471 1251,444"/><path class="l" d="M1251 432L1427 487"/>
<polygon class="h" points="1050,478 1151,450 1154,456 1052,484"/><polygon class="h" points="1154,454 1249,432 1251,438 1156,460"/>
<polygon class="h" points="1251,428 1351,405 1353,410 1253,434"/>
<polygon class="d" points="1351,405 1540,464 1534,478 1351,418"/><path class="l" d="M1351 403L1540 462"/>
<path class="tl" d="M1370 465L1448 448"/>

<!-- FRAMES (blue) -->
<g fill="url(#bg)">
<rect x="799" y="245" width="8" height="148"/><rect x="822" y="250" width="7" height="95"/><rect x="838" y="255" width="7" height="110"/><rect x="850" y="258" width="7" height="127"/><rect x="877" y="265" width="9" height="102"/><rect x="928" y="272" width="9" height="148"/><rect x="956" y="270" width="9" height="70"/><rect x="985" y="250" width="8" height="80"/>
<rect x="1012" y="290" width="8" height="137"/><rect x="1039" y="305" width="8" height="115"/><rect x="1078" y="310" width="9" height="93"/><rect x="1111" y="322" width="11" height="148"/><rect x="1147" y="315" width="9" height="140"/><rect x="1156" y="315" width="9" height="120"/><rect x="1197" y="303" width="9" height="147"/>
<rect x="561" y="412" width="9" height="93"/><rect x="576" y="420" width="10" height="88"/><rect x="593" y="425" width="15" height="91"/><rect x="623" y="430" width="10" height="78"/><rect x="699" y="455" width="11" height="25"/>
</g>
<!-- brown panels inside the frame tops -->
<polygon class="b" points="801,246 840,221 991,251 932,273"/>
<polygon class="b" points="1015,292 1084,266 1204,305 1117,323"/>
<polygon class="b" points="562,413 599,390 710,409 642,433"/>
<polygon class="b" points="642,433 710,409 799,436 716,456"/>
<g fill="none" stroke-linejoin="bevel">
<g stroke="#66a8cf" stroke-width="7.500" transform="translate(0,1)"><use href="#f1b"/><use href="#f3b"/><use href="#f2b"/></g>
<g stroke="#85dcfb" stroke-width="4" transform="translate(0,-1)"><use href="#f1b"/><use href="#f3b"/><use href="#f2b"/></g>
</g>
<g fill="url(#bg)">
<rect x="640" y="434" width="9" height="138"/><rect x="671" y="446" width="9" height="136"/><rect x="712" y="455" width="9" height="147"/><rect x="757" y="445" width="9" height="147"/><rect x="795" y="437" width="7" height="146"/>
</g>

<!-- Right front -->
<use href="#rb"/><use href="#rb" y="83"/><use href="#rb" y="166"/>
<!-- roof beam + floors -->
<polygon class="e" points="1034,578 1540,462 1545,490 1034,604"/>
<path d="M1034 578L1540 462" stroke="#f98f1a" stroke-width="2" fill="none"/>
<use href="#fb"/><use href="#fb" y="83"/><use href="#fb" y="166"/>
<!-- white windows -->
<polygon fill="#fff" points="1461,510 1533,494 1533,545 1516,545 1461,525"/>
<polygon fill="#fff" points="1461,594 1533,577 1533,625 1461,602"/>
<polygon fill="#fff" points="1461,677 1533,660 1533,702 1475,684"/>
<polygon class="d" points="1461,525 1533,548 1533,556 1461,534"/>
<polygon class="d" points="1461,604 1533,628 1533,640 1461,616"/>
<polygon class="d" points="1461,680 1533,703 1533,715 1461,695"/>
<rect x="1447" y="507" width="14" height="26" fill="url(#cg3)"/><rect x="1447" y="590" width="14" height="26" fill="url(#cg3)"/><rect x="1447" y="672" width="14" height="26" fill="url(#cg3)"/>
<!-- legs -->
<rect x="1043" y="850" width="13" height="31" fill="url(#cg3)"/><rect x="1146" y="825" width="11" height="33" fill="url(#cg3)"/><rect x="1247" y="803" width="12" height="31" fill="url(#cg3)"/><rect x="1348" y="778" width="12" height="33" fill="url(#cg3)"/><rect x="1447" y="750" width="16" height="39" fill="url(#cg3)"/>
<!-- columns -->
<rect x="1125" y="565" width="20" height="343" fill="url(#cg)"/><rect x="1227" y="540" width="20" height="345" fill="url(#cg)"/><rect x="1328" y="518" width="20" height="344" fill="url(#cg)"/><rect x="1431" y="494" width="16" height="344" fill="url(#cg)"/><rect x="1533" y="470" width="12" height="344" fill="url(#cg)"/>

<!-- Left main section interiors -->
<polygon class="b" points="452,625 625,685 625,950 452,892"/>
<use href="#fl"/><use href="#fl" y="86"/><use href="#fl" y="171"/>
<polygon class="e" points="453,700 538,679 538,686 453,707"/><path class="l" d="M453 703L538 682"/>
<polygon class="e" points="452,850 523,839 523,846 452,857"/><path class="l" d="M452 853L523 842"/>

<!-- left beams (dark faces) -->
<polygon class="d" points="257,574 377,596 377,625 257,600"/><path class="l" d="M257 576L377 598"/>
<polygon class="d" points="257,663 370,683 370,703 257,683"/><path class="l" d="M257 663L370 683"/>
<polygon class="d" points="260,752 370,767 370,787 260,770"/><path class="l" d="M260 752L370 770"/>
<polygon class="h" points="263,655 320,605 320,614 263,664"/><polygon class="d" points="263,664 320,614 320,622 263,672"/>
<polygon class="h" points="263,745 320,695 320,703 263,753"/><polygon class="d" points="263,753 320,703 320,712 263,762"/>
<polygon class="h" points="258,842 320,768 320,776 262,850"/><polygon class="d" points="258,850 320,776 320,785 262,856"/>
<polygon class="h" points="379,676 438,625 438,633 379,684"/><polygon class="d" points="379,684 438,633 438,642 379,693"/>
<polygon class="h" points="379,762 438,712 438,720 379,770"/><polygon class="d" points="379,770 438,720 438,729 379,779"/>
<polygon class="h" points="379,847 438,795 438,803 379,855"/><polygon class="d" points="379,855 438,803 438,812 379,862"/>
<polygon class="h" points="383,941 438,885 438,893 383,947"/><polygon class="d" points="383,947 438,893 438,902 383,950"/>
<polygon class="d" points="378,600 443,613 632,672 625,697 443,633 378,622"/>
<path class="l" d="M377 596L443 613M443 613L632 672"/>
<use href="#lb"/><use href="#lb" y="84"/>
<polygon class="d" points="447,863 538,892 538,917 447,890"/><path class="l" d="M447 863L538 892"/>
<polygon class="d" points="548,897 625,920 625,945 548,922"/><path class="l" d="M548 897L625 920"/>
<polygon class="d" points="378,848 438,865 438,882 378,863"/><path class="l" d="M378 848L438 865"/>
<!-- left cols -->
<rect x="252" y="588" width="11" height="257" fill="url(#cg2)"/><rect x="320" y="598" width="12" height="259" fill="url(#cg2)"/><rect x="370" y="602" width="13" height="343" fill="url(#cg2)"/><rect x="437" y="625" width="15" height="340" fill="url(#cg2)"/><rect x="537" y="658" width="16" height="340" fill="url(#cg2)"/>

<!-- front-right-of-left-block -->
<polygon class="b" points="638,700 908,636 908,880 638,940"/>
<polygon class="d" points="638,700 908,636 908,644 638,708"/>
<use href="#rc"/><use href="#rc" y="84"/><use href="#rc" y="167"/>
<path class="tl" d="M650 720L700 708M652 803L700 792M652 886L700 875M745 705L825 680M837 682L888 698M745 790L825 763M837 763L888 781M745 873L825 848"/>
<polygon class="d" points="837,650 908,636 908,697 888,698 837,682"/>
<polygon class="d" points="837,728 908,712 908,778 885,781 837,763"/>
<polygon class="o2" points="837,812 908,795 908,861 888,865 837,848"/>
<polygon class="o2" points="837,900 908,880 908,959 837,938"/>
<rect x="908" y="878" width="5" height="82" fill="#834c0d"/>
<polygon class="e" points="632,672 908,608 908,636 632,700"/><path d="M632 672L908 608" stroke="#f98f1a" stroke-width="2" fill="none"/>
<polygon class="e" points="638,752 908,697 908,712 638,778"/><path class="l" d="M638 752L908 697"/>
<polygon class="e" points="638,835 908,780 908,795 638,862"/><path class="l" d="M638 835L908 780"/>
<polygon class="e" points="638,922 908,861 908,880 638,940"/><path class="l" d="M638 922L908 861"/>
<!-- legs center -->
<rect x="638" y="936" width="12" height="39" fill="url(#cg3)"/><rect x="709" y="915" width="13" height="27" fill="url(#cg3)"/><rect x="740" y="900" width="12" height="52" fill="url(#cg3)"/><rect x="752" y="900" width="10" height="33" fill="#834c0d"/>
<!-- center cols -->
<rect x="624" y="668" width="14" height="357" fill="url(#cg2)"/><rect x="722" y="660" width="16" height="342" fill="url(#cg)"/><rect x="825" y="640" width="12" height="338" fill="url(#cg4)"/>

<!-- wall -->
<rect x="908" y="618" width="28" height="277" class="b"/>
<polygon class="e" points="908,618 925,614 925,790 908,790"/>
<polygon class="e" points="925,614 936,612 936,632 925,634"/>
<polygon class="b" points="925,634 936,632 936,693 925,695"/>
<polygon class="d" points="908,697 936,690 936,697 908,705"/>
<polygon class="e" points="925,697 936,695 936,735 925,737"/>
<polygon fill="#e8e8e8" points="927,737 936,735 936,760 927,770"/>
<polygon fill="#fff" points="908,743 911,743 911,767 908,767"/>
<polygon class="b" points="925,770 936,762 936,777 925,780"/>
<polygon class="e" points="936,612 1033,590 1033,757 936,779"/>
<rect x="1017" y="654" width="12" height="52" fill="#8e5410"/><rect x="1017" y="731" width="12" height="32" fill="#8e5410"/>
<polygon class="d" points="908,785 936,779 936,787 908,795"/>
<rect x="912" y="795" width="12" height="58" class="e"/>
<polygon fill="#e4e4e4" points="927,817 936,815 936,843 927,850"/>
<polygon class="d" points="908,862 936,855 936,895 908,897"/>
<polygon class="d" points="936,779 1033,757 1033,930 933,953 933,895 936,895"/>
<rect x="913" y="897" width="12" height="46" class="e"/>
<path class="tl" d="M1033 590V930M910 618V955M936 779L1033 757M910 700L936 693M910 785L936 779"/>
</svg>
</body></html>
